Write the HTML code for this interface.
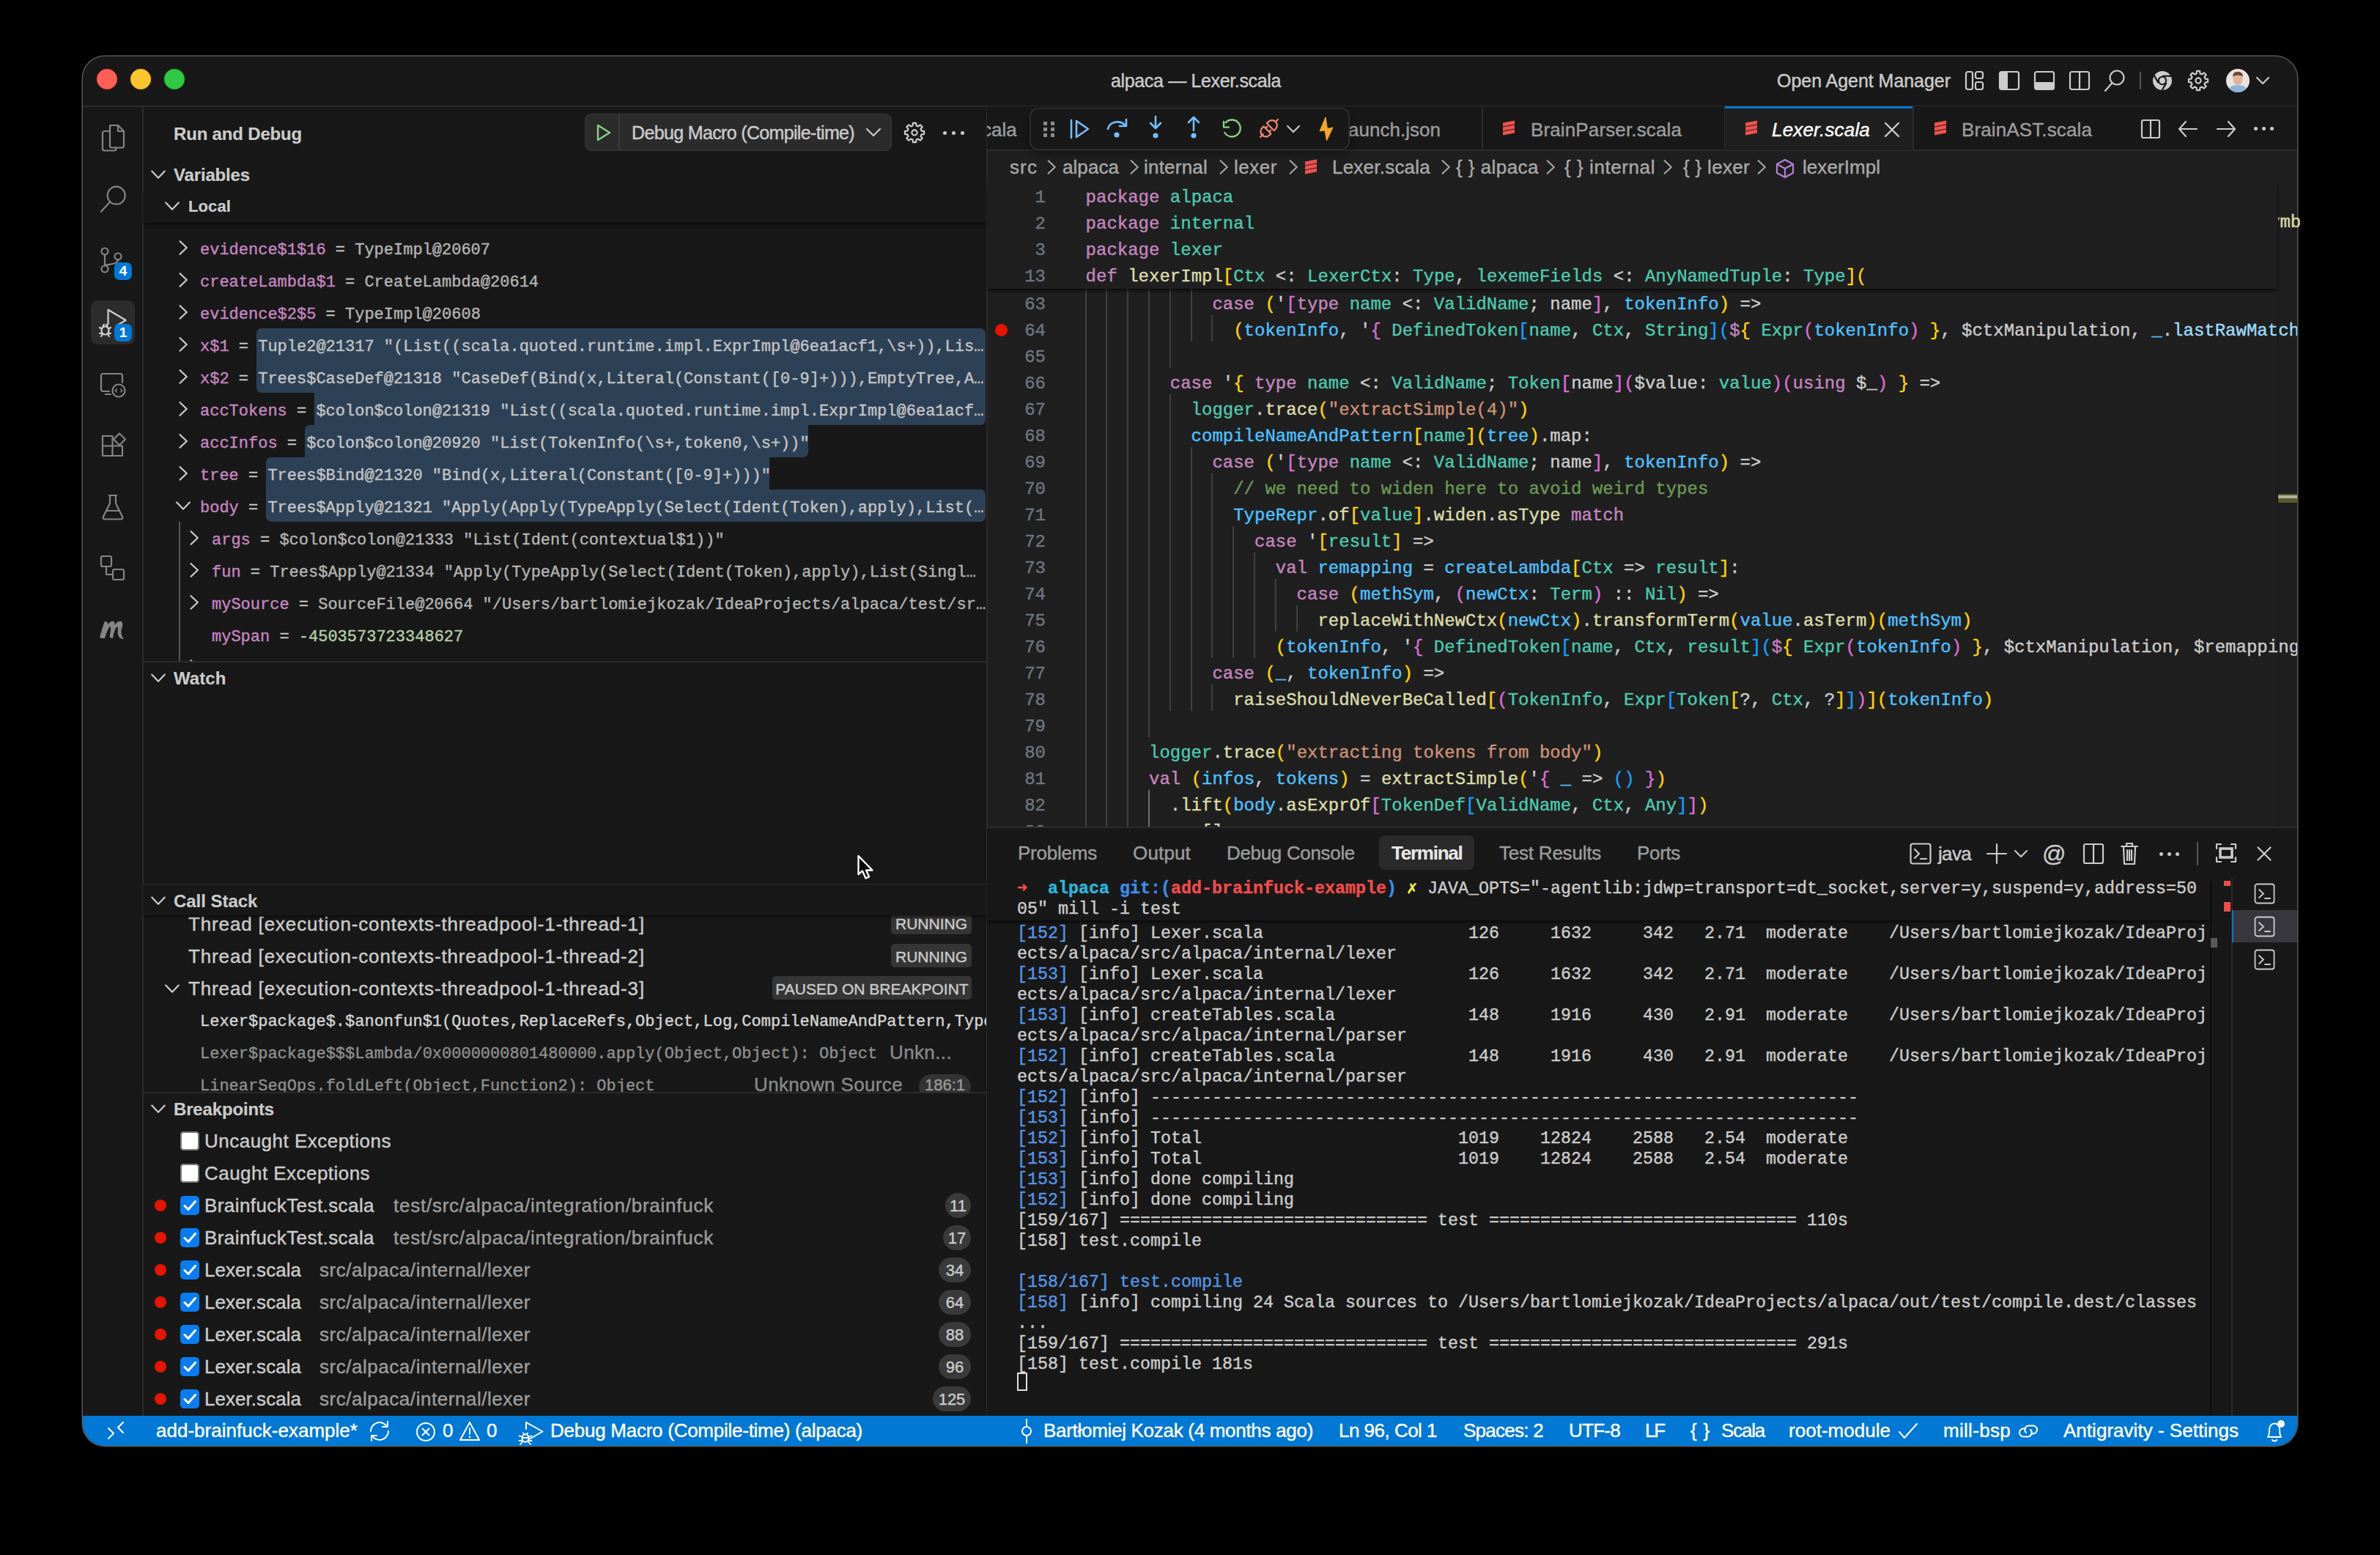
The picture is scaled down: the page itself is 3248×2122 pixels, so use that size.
<!DOCTYPE html>
<html><head><meta charset="utf-8"><style>
html,body{margin:0;padding:0;width:3248px;height:2122px;background:#000;overflow:hidden}
body{position:relative;font-family:"Liberation Sans",sans-serif}
div,svg{position:absolute;box-sizing:border-box}
span{position:static}
div{-webkit-text-stroke:0.4px currentColor}
</style></head><body>
<div style="left:113px;top:77px;width:3022px;height:1896px;background:#181818;border-radius:30px;overflow:hidden;box-shadow:0 0 0 1.5px #565656"></div>
<div style="left:1347px;top:205px;width:1788px;height:924px;background:#1f1f1f;"></div>
<div style="left:113px;top:144px;width:3022px;height:1.5px;background:#2b2b2b;"></div>
<div style="left:194px;top:145px;width:1.5px;height:1787px;background:#2b2b2b;"></div>
<div style="left:1346px;top:145px;width:1.5px;height:1787px;background:#2b2b2b;"></div>
<svg style="left:131px;top:93px;" width="30" height="30" viewBox="0 0 30 30" fill="none"><circle cx="15" cy="15" r="13.8" fill="#ff5f57" stroke="#e0443e" stroke-width="0.8"/></svg>
<svg style="left:177px;top:93px;" width="30" height="30" viewBox="0 0 30 30" fill="none"><circle cx="15" cy="15" r="13.8" fill="#fdc52e" stroke="#e0a822" stroke-width="0.8"/></svg>
<svg style="left:223px;top:93px;" width="30" height="30" viewBox="0 0 30 30" fill="none"><circle cx="15" cy="15" r="13.8" fill="#31c845" stroke="#1fae33" stroke-width="0.8"/></svg>
<div style="left:1516px;top:92.84px;font-family:'Liberation Sans', sans-serif;font-size:25px;line-height:35px;color:#cccccc;white-space:pre;letter-spacing:-0.352px;">alpaca — Lexer.scala</div>
<div style="left:2425px;top:92.84px;font-family:'Liberation Sans', sans-serif;font-size:25px;line-height:35px;color:#cccccc;white-space:pre;letter-spacing:-0.037px;">Open Agent Manager</div>
<svg style="left:2680px;top:95px;" width="30" height="30" viewBox="0 0 30 30" fill="none"><rect x="3" y="3" width="9" height="24" rx="2.5" stroke="#cccccc" stroke-width="2.2" fill="none" stroke-linecap="round" stroke-linejoin="round"/><rect x="16" y="3" width="10" height="9" rx="2.5" stroke="#cccccc" stroke-width="2.2" fill="none" stroke-linecap="round" stroke-linejoin="round"/><rect x="16" y="17" width="10" height="10" rx="2.5" stroke="#cccccc" stroke-width="2.2" fill="none" stroke-linecap="round" stroke-linejoin="round"/></svg>
<svg style="left:2727px;top:95px;" width="30" height="30" viewBox="0 0 30 30" fill="none"><rect x="2" y="3" width="26" height="24" rx="2.5" stroke="#cccccc" stroke-width="2.2" fill="none" stroke-linecap="round" stroke-linejoin="round"/><rect x="2" y="3" width="11" height="24" rx="2" fill="#cccccc"/></svg>
<svg style="left:2775px;top:95px;" width="30" height="30" viewBox="0 0 30 30" fill="none"><rect x="2" y="3" width="26" height="24" rx="2.5" stroke="#cccccc" stroke-width="2.2" fill="none" stroke-linecap="round" stroke-linejoin="round"/><rect x="2" y="17" width="26" height="10" rx="2" fill="#cccccc"/></svg>
<svg style="left:2823px;top:95px;" width="30" height="30" viewBox="0 0 30 30" fill="none"><rect x="2" y="3" width="26" height="24" rx="2.5" stroke="#cccccc" stroke-width="2.2" fill="none" stroke-linecap="round" stroke-linejoin="round"/><path d="M15 3V27" stroke="#cccccc" stroke-width="2.2" fill="none" stroke-linecap="round" stroke-linejoin="round"/></svg>
<svg style="left:2870px;top:93px;" width="32" height="34" viewBox="0 0 32 34" fill="none"><circle cx="19" cy="13" r="9.5" stroke="#cccccc" stroke-width="2.2" fill="none" stroke-linecap="round" stroke-linejoin="round"/><path d="M12.5 20L3 31" stroke="#cccccc" stroke-width="2.2" fill="none" stroke-linecap="round" stroke-linejoin="round"/></svg>
<div style="left:2920px;top:98px;width:2px;height:24px;background:#555555;"></div>
<svg style="left:2936px;top:95px;" width="30" height="30" viewBox="0 0 30 30" fill="none"><circle cx="15" cy="15" r="13" fill="#cccccc"/><circle cx="15" cy="15" r="6.2" fill="#181818"/><circle cx="15" cy="15" r="4.2" fill="#cccccc"/><path d="M15 8.8H27.5" stroke="#181818" stroke-width="2.2"/><path d="M9.6 18.1L3.4 7.4" stroke="#181818" stroke-width="2.2"/><path d="M20.4 18.1L14.2 28.8" stroke="#181818" stroke-width="2.2"/></svg>
<svg style="left:2985px;top:95px" width="30" height="30" viewBox="0 0 30 30" fill="none"><path d="M28.04 12.94 L28.04 17.06 L24.59 17.46 L23.52 20.04 L25.68 22.76 L22.76 25.68 L20.04 23.52 L17.46 24.59 L17.06 28.04 L12.94 28.04 L12.54 24.59 L9.96 23.52 L7.24 25.68 L4.32 22.76 L6.48 20.04 L5.41 17.46 L1.96 17.06 L1.96 12.94 L5.41 12.54 L6.48 9.96 L4.32 7.24 L7.24 4.32 L9.96 6.48 L12.54 5.41 L12.94 1.96 L17.06 1.96 L17.46 5.41 L20.04 6.48 L22.76 4.32 L25.68 7.24 L23.52 9.96 L24.59 12.54Z" stroke="#cccccc" stroke-width="2.2" stroke-linejoin="round"/><circle cx="15.0" cy="15.0" r="3.5999999999999996" stroke="#cccccc" stroke-width="2.2"/></svg>
<svg style="left:3038px;top:94px;" width="32" height="32" viewBox="0 0 32 32" fill="none"><defs><clipPath id="av"><circle cx="16" cy="16" r="16"/></clipPath></defs><g clip-path="url(#av)"><rect width="32" height="32" fill="#e9e4df"/><ellipse cx="16" cy="30" rx="13" ry="8" fill="#8fb3d9"/><ellipse cx="16" cy="14" rx="6.5" ry="8" fill="#e0b49a"/><path d="M9 11C9 5 12 4 16 4C21 4 23 6 23 11C21 8 12 8 9 11Z" fill="#6b4a32"/></g></svg>
<svg style="left:3076px;top:100px;" width="24" height="20" viewBox="0 0 24 20" fill="none"><path d="M4 6L12 14L20 6" stroke="#cccccc" stroke-width="2.2" fill="none" stroke-linecap="round" stroke-linejoin="round"/></svg>
<svg style="left:134px;top:166px;" width="40" height="44" viewBox="0 0 40 44" fill="none"><path d="M16 5H27L35 13V33C35 34.5 34 35.5 32.5 35.5H18.5C17 35.5 16 34.5 16 33V7.5C16 6 17 5 18.5 5Z" stroke="#858585" stroke-width="2.2" fill="none" stroke-linecap="round" stroke-linejoin="round"/><path d="M27 5V13H35" stroke="#858585" stroke-width="2.2" fill="none" stroke-linecap="round" stroke-linejoin="round"/><path d="M16 13H8.5C7 13 6 14 6 15.5V37C6 38.5 7 39.5 8.5 39.5H22C23.5 39.5 24.5 38.5 24.5 37V35.5" stroke="#858585" stroke-width="2.2" fill="none" stroke-linecap="round" stroke-linejoin="round"/></svg>
<svg style="left:134px;top:249px;" width="40" height="44" viewBox="0 0 40 44" fill="none"><circle cx="24.7" cy="17.7" r="12" stroke="#858585" stroke-width="2.2" fill="none" stroke-linecap="round" stroke-linejoin="round"/><path d="M16.3 26.2L4 39.8" stroke="#858585" stroke-width="2.2" fill="none" stroke-linecap="round" stroke-linejoin="round"/></svg>
<svg style="left:134px;top:336px;" width="40" height="40" viewBox="0 0 40 40" fill="none"><circle cx="9" cy="7" r="4.5" stroke="#858585" stroke-width="2.2" fill="none" stroke-linecap="round" stroke-linejoin="round"/><circle cx="9" cy="31" r="4.5" stroke="#858585" stroke-width="2.2" fill="none" stroke-linecap="round" stroke-linejoin="round"/><circle cx="27" cy="14" r="4.5" stroke="#858585" stroke-width="2.2" fill="none" stroke-linecap="round" stroke-linejoin="round"/><path d="M9 11.5V26.5" stroke="#858585" stroke-width="2.2" fill="none" stroke-linecap="round" stroke-linejoin="round"/><path d="M27 18.5C27 24 20 24 9 26" stroke="#858585" stroke-width="2.2" fill="none" stroke-linecap="round" stroke-linejoin="round"/></svg>
<div style="left:156px;top:358px;width:24px;height:24px;border-radius:7px;background:#0078d4"></div>
<div style="left:156px;top:357.42px;font-family:'Liberation Sans', sans-serif;font-size:19px;line-height:26px;color:#ffffff;white-space:pre;font-weight:700;-webkit-text-stroke:0.15px currentColor;width:24px;text-align:center;">4</div>
<div style="left:124px;top:410px;width:60px;height:60px;border-radius:9px;background:#2c2c2c"></div>
<svg style="left:134px;top:418px;" width="44" height="44" viewBox="0 0 44 44" fill="none"><path d="M13.6 4.7L37.7 19L13.6 33.3Z" stroke="#d0d0d0" stroke-width="2.2" fill="none" stroke-linecap="round" stroke-linejoin="round"/><circle cx="18" cy="33" r="9" fill="#2c2c2c"/><ellipse cx="9.5" cy="33" rx="5" ry="5.5" stroke="#d0d0d0" stroke-width="2.2" fill="none" stroke-linecap="round" stroke-linejoin="round"/><path d="M2 29L4.5 30.5M2 37H4.5M17 29L14.5 30.5M17 37H14.5M6.5 27L8 25M12.5 27L11 25M4 41L6 38M15 41L13 38" stroke="#d0d0d0" stroke-width="2.2" fill="none" stroke-linecap="round" stroke-linejoin="round"/></svg>
<div style="left:156px;top:442px;width:24px;height:24px;border-radius:7px;background:#0078d4"></div>
<div style="left:156px;top:441.42px;font-family:'Liberation Sans', sans-serif;font-size:19px;line-height:26px;color:#ffffff;white-space:pre;font-weight:700;-webkit-text-stroke:0.15px currentColor;width:24px;text-align:center;">1</div>
<svg style="left:134px;top:505px;" width="40" height="40" viewBox="0 0 40 40" fill="none"><path d="M15 29H6.5C5 29 4 28 4 26.5V7.5C4 6 5 5 6.5 5H30.5C32 5 33 6 33 7.5V17" stroke="#858585" stroke-width="2.2" fill="none" stroke-linecap="round" stroke-linejoin="round"/><path d="M10 33H17" stroke="#858585" stroke-width="2.2" fill="none" stroke-linecap="round" stroke-linejoin="round"/><circle cx="28" cy="28" r="8.5" stroke="#858585" stroke-width="2.2" fill="none" stroke-linecap="round" stroke-linejoin="round"/><path d="M25.5 25.5L23.5 28L25.5 30.5M30.5 25.5L32.5 28L30.5 30.5" stroke="#858585" stroke-width="1.6" fill="none"/></svg>
<svg style="left:134px;top:588px;" width="40" height="40" viewBox="0 0 40 40" fill="none"><path d="M6 7H19.5V20.5H6Z M6 20.5H19.5V34H6Z M19.5 20.5H33V34H19.5Z" stroke="#858585" stroke-width="2.2" fill="none" stroke-linecap="round" stroke-linejoin="round"/><path d="M29 3.5L37 11.5L29 19.5L21 11.5Z" stroke="#858585" stroke-width="2.2" fill="none" stroke-linecap="round" stroke-linejoin="round"/></svg>
<svg style="left:136px;top:672px;" width="36" height="40" viewBox="0 0 36 40" fill="none"><path d="M13 4H23M14 4V15L5 33C4 35 5 36.5 7 36.5H29C31 36.5 32 35 31 33L22 15V4" stroke="#858585" stroke-width="2.2" fill="none" stroke-linecap="round" stroke-linejoin="round"/><path d="M9 25H27" stroke="#858585" stroke-width="2.2" fill="none" stroke-linecap="round" stroke-linejoin="round"/></svg>
<svg style="left:134px;top:755px;" width="40" height="40" viewBox="0 0 40 40" fill="none"><rect x="4" y="4" width="14" height="14" rx="2" stroke="#858585" stroke-width="2.2" fill="none" stroke-linecap="round" stroke-linejoin="round"/><rect x="20" y="22" width="15" height="14" rx="2" stroke="#858585" stroke-width="2.2" fill="none" stroke-linecap="round" stroke-linejoin="round"/><path d="M11 18V29H20" stroke="#858585" stroke-width="2.2" fill="none" stroke-linecap="round" stroke-linejoin="round"/></svg>
<svg style="left:132px;top:840px;" width="44" height="36" viewBox="0 0 44 36" fill="none"><path d="M4 30C7 20 9 12 11 8C13 8 16 9 15 13C17 9 20 7 23 8C25 9 25 12 24 14C27 9 30 7 33 8C36 9 36 13 34 18C33 22 33 27 37 32C33 32 30 30 29 26C28 22 30 17 28 15C25 17 23 24 22 31C19 31 17 30 18 26C19 21 20 17 18 15C15 18 13 25 11 31C8 31 6 31 4 30Z" fill="#858585"/></svg>
<div style="left:1347px;top:145px;width:1788px;height:59px;background:#181818;"></div>
<div style="left:1347px;top:204px;width:1788px;height:1.5px;background:#2b2b2b;"></div>
<div style="left:2022px;top:145px;width:1.5px;height:60px;background:#2b2b2b;"></div>
<div style="left:2353px;top:145px;width:1.5px;height:60px;background:#2b2b2b;"></div>
<div style="left:2610px;top:145px;width:1.5px;height:60px;background:#2b2b2b;"></div>
<div style="left:2354px;top:146px;width:256px;height:59px;background:#1f1f1f;"></div>
<div style="left:2354px;top:145px;width:256px;height:2.5px;background:#0078d4;"></div>
<div style="left:1340px;top:158.99px;font-family:'Liberation Sans', sans-serif;font-size:26px;line-height:36px;color:#9d9d9d;white-space:pre;clip-path:inset(0 0 0 7px);">cala</div>
<div style="left:1840px;top:158.99px;font-family:'Liberation Sans', sans-serif;font-size:26px;line-height:36px;color:#9d9d9d;white-space:pre;letter-spacing:0.023px;">aunch.json</div>
<svg style="left:2050px;top:164px;" width="18" height="22" viewBox="0 0 18 22" fill="none"><path d="M1 3.5L17 0.5V5.5L1 8.5Z M1 9.5L17 6.5V11.5L1 14.5Z M1 15.5L17 12.5V17.5L1 20.5Z" fill="#f0524f"/></svg>
<div style="left:2089px;top:158.99px;font-family:'Liberation Sans', sans-serif;font-size:26px;line-height:36px;color:#9d9d9d;white-space:pre;letter-spacing:0.131px;">BrainParser.scala</div>
<svg style="left:2381px;top:164px;" width="18" height="22" viewBox="0 0 18 22" fill="none"><path d="M1 3.5L17 0.5V5.5L1 8.5Z M1 9.5L17 6.5V11.5L1 14.5Z M1 15.5L17 12.5V17.5L1 20.5Z" fill="#f0524f"/></svg>
<div style="left:2418px;top:158.99px;font-family:'Liberation Sans', sans-serif;font-size:26px;line-height:36px;color:#ffffff;white-space:pre;font-style:italic;letter-spacing:0.182px;">Lexer.scala</div>
<svg style="left:2570px;top:165px;" width="24" height="24" viewBox="0 0 24 24" fill="none"><path d="M3 3L21 21M21 3L3 21" stroke="#cccccc" stroke-width="2.4" stroke-linecap="round"/></svg>
<svg style="left:2639px;top:164px;" width="18" height="22" viewBox="0 0 18 22" fill="none"><path d="M1 3.5L17 0.5V5.5L1 8.5Z M1 9.5L17 6.5V11.5L1 14.5Z M1 15.5L17 12.5V17.5L1 20.5Z" fill="#f0524f"/></svg>
<div style="left:2677px;top:158.99px;font-family:'Liberation Sans', sans-serif;font-size:26px;line-height:36px;color:#9d9d9d;white-space:pre;letter-spacing:0.121px;">BrainAST.scala</div>
<svg style="left:2921px;top:162px;" width="28" height="28" viewBox="0 0 28 28" fill="none"><rect x="2" y="2" width="24" height="24" rx="2" stroke="#cccccc" stroke-width="2.2" fill="none" stroke-linecap="round" stroke-linejoin="round"/><path d="M14 2V26" stroke="#cccccc" stroke-width="2.2" fill="none" stroke-linecap="round" stroke-linejoin="round"/></svg>
<svg style="left:2971px;top:162px;" width="30" height="28" viewBox="0 0 30 28" fill="none"><path d="M27 14H3M12 4L3 14L12 24" stroke="#cccccc" stroke-width="2.2" fill="none" stroke-linecap="round" stroke-linejoin="round"/></svg>
<svg style="left:3023px;top:162px;" width="30" height="28" viewBox="0 0 30 28" fill="none"><path d="M3 14H27M18 4L27 14L18 24" stroke="#cccccc" stroke-width="2.2" fill="none" stroke-linecap="round" stroke-linejoin="round"/></svg>
<div style="left:3076px;top:173px;width:5px;height:5px;border-radius:3px;background:#cccccc"></div>
<div style="left:3087px;top:173px;width:5px;height:5px;border-radius:3px;background:#cccccc"></div>
<div style="left:3098px;top:173px;width:5px;height:5px;border-radius:3px;background:#cccccc"></div>
<div style="left:1405px;top:147px;width:437px;height:58px;border-radius:12px;background:#181818;box-shadow:inset 0 0 0 1.5px #333333, 0 4px 10px rgba(0,0,0,0.4)"></div>
<div style="left:1424px;top:166px;width:5px;height:5px;background:#8c8c8c"></div>
<div style="left:1434px;top:166px;width:5px;height:5px;background:#8c8c8c"></div>
<div style="left:1424px;top:174px;width:5px;height:5px;background:#8c8c8c"></div>
<div style="left:1434px;top:174px;width:5px;height:5px;background:#8c8c8c"></div>
<div style="left:1424px;top:182px;width:5px;height:5px;background:#8c8c8c"></div>
<div style="left:1434px;top:182px;width:5px;height:5px;background:#8c8c8c"></div>
<svg style="left:1458px;top:160px;" width="32" height="32" viewBox="0 0 32 32" fill="none"><path d="M4 4V28" stroke="#75beff" stroke-width="2.6" fill="none" stroke-linecap="round" stroke-linejoin="round"/><path d="M11 5L27 16L11 27Z" stroke="#75beff" stroke-width="2.6" fill="none" stroke-linecap="round" stroke-linejoin="round"/></svg>
<svg style="left:1508px;top:158px;" width="34" height="34" viewBox="0 0 34 34" fill="none"><path d="M4 18C6 8 20 5 28 13" stroke="#75beff" stroke-width="2.6" fill="none" stroke-linecap="round" stroke-linejoin="round"/><path d="M29 5V14H20" stroke="#75beff" stroke-width="2.6" fill="none" stroke-linecap="round" stroke-linejoin="round"/><circle cx="16" cy="26" r="3.6" fill="#75beff"/></svg>
<svg style="left:1561px;top:156px;" width="32" height="38" viewBox="0 0 32 38" fill="none"><path d="M16 3V19M9 12L16 19L23 12" stroke="#75beff" stroke-width="2.6" fill="none" stroke-linecap="round" stroke-linejoin="round"/><circle cx="16" cy="29" r="3.6" fill="#75beff"/></svg>
<svg style="left:1613px;top:156px;" width="32" height="38" viewBox="0 0 32 38" fill="none"><path d="M16 22V4M9 11L16 4L23 11" stroke="#75beff" stroke-width="2.6" fill="none" stroke-linecap="round" stroke-linejoin="round"/><circle cx="16" cy="29" r="3.6" fill="#75beff"/></svg>
<svg style="left:1664px;top:158px;" width="36" height="36" viewBox="0 0 36 36" fill="none"><path d="M7.4 23A11.5 11.5 0 1 0 8.7 9.3" stroke="#89d185" stroke-width="2.4" fill="none" stroke-linecap="round"/><path d="M6 8V15.6H13" stroke="#89d185" stroke-width="2.4" fill="none" stroke-linecap="round" stroke-linejoin="round"/></svg>
<svg style="left:1714px;top:157px;" width="36" height="36" viewBox="0 0 36 36" fill="none"><g transform="rotate(-45 18 18)" stroke="#f48771" stroke-width="2.2" fill="none" stroke-linejoin="round" stroke-linecap="round"><path d="M1 18H6.5"/><path d="M14.5 11H11.5A7 7 0 0 0 11.5 25H14.5Z"/><path d="M14.5 14.5H17.5M14.5 21.5H17.5"/><path d="M20.5 11H23.5A7 7 0 0 1 23.5 25H20.5Z"/><path d="M30.5 18H35"/></g></svg>
<svg style="left:1754px;top:166px;" width="22" height="20" viewBox="0 0 22 20" fill="none"><path d="M3 6L11 14L19 6" stroke="#cccccc" stroke-width="2" fill="none" stroke-linecap="round"/></svg>
<svg style="left:1796px;top:156px;" width="28" height="40" viewBox="0 0 28 40" fill="none"><path d="M13 4L5 23L12 22L14.5 36L23 18L15.5 19.5Z" fill="#f5a623" stroke="#f5a623" stroke-width="1" stroke-linejoin="round"/></svg>
<div style="left:1378px;top:209.99px;font-family:'Liberation Sans', sans-serif;font-size:26px;line-height:36px;color:#a9a9a9;white-space:pre;letter-spacing:1.109px;">src</div>
<svg style="left:1424px;top:217.0px;" width="22" height="22" viewBox="0 0 22 22" fill="none"><path d="M6.6 2.2L15.8 11.0L6.6 19.8" stroke="#a9a9a9" stroke-width="2" fill="none" stroke-linecap="round" stroke-linejoin="round"/></svg>
<div style="left:1450px;top:209.99px;font-family:'Liberation Sans', sans-serif;font-size:26px;line-height:36px;color:#a9a9a9;white-space:pre;letter-spacing:0.062px;">alpaca</div>
<svg style="left:1537px;top:217.0px;" width="22" height="22" viewBox="0 0 22 22" fill="none"><path d="M6.6 2.2L15.8 11.0L6.6 19.8" stroke="#a9a9a9" stroke-width="2" fill="none" stroke-linecap="round" stroke-linejoin="round"/></svg>
<div style="left:1561px;top:209.99px;font-family:'Liberation Sans', sans-serif;font-size:26px;line-height:36px;color:#a9a9a9;white-space:pre;letter-spacing:0.215px;">internal</div>
<svg style="left:1659px;top:217.0px;" width="22" height="22" viewBox="0 0 22 22" fill="none"><path d="M6.6 2.2L15.8 11.0L6.6 19.8" stroke="#a9a9a9" stroke-width="2" fill="none" stroke-linecap="round" stroke-linejoin="round"/></svg>
<div style="left:1684px;top:209.99px;font-family:'Liberation Sans', sans-serif;font-size:26px;line-height:36px;color:#a9a9a9;white-space:pre;letter-spacing:0.528px;">lexer</div>
<svg style="left:1754px;top:217.0px;" width="22" height="22" viewBox="0 0 22 22" fill="none"><path d="M6.6 2.2L15.8 11.0L6.6 19.8" stroke="#a9a9a9" stroke-width="2" fill="none" stroke-linecap="round" stroke-linejoin="round"/></svg>
<svg style="left:1780px;top:217px;" width="18" height="22" viewBox="0 0 18 22" fill="none"><path d="M1 3.5L17 0.5V5.5L1 8.5Z M1 9.5L17 6.5V11.5L1 14.5Z M1 15.5L17 12.5V17.5L1 20.5Z" fill="#f0524f"/></svg>
<div style="left:1818px;top:209.99px;font-family:'Liberation Sans', sans-serif;font-size:26px;line-height:36px;color:#a9a9a9;white-space:pre;letter-spacing:0.224px;">Lexer.scala</div>
<svg style="left:1962px;top:217.0px;" width="22" height="22" viewBox="0 0 22 22" fill="none"><path d="M6.6 2.2L15.8 11.0L6.6 19.8" stroke="#a9a9a9" stroke-width="2" fill="none" stroke-linecap="round" stroke-linejoin="round"/></svg>
<div style="left:1987px;top:209.99px;font-family:'Liberation Sans', sans-serif;font-size:26px;line-height:36px;color:#a9a9a9;white-space:pre;letter-spacing:0.456px;">{ } alpaca</div>
<svg style="left:2105px;top:217.0px;" width="22" height="22" viewBox="0 0 22 22" fill="none"><path d="M6.6 2.2L15.8 11.0L6.6 19.8" stroke="#a9a9a9" stroke-width="2" fill="none" stroke-linecap="round" stroke-linejoin="round"/></svg>
<div style="left:2135px;top:209.99px;font-family:'Liberation Sans', sans-serif;font-size:26px;line-height:36px;color:#a9a9a9;white-space:pre;letter-spacing:0.576px;">{ } internal</div>
<svg style="left:2265px;top:217.0px;" width="22" height="22" viewBox="0 0 22 22" fill="none"><path d="M6.6 2.2L15.8 11.0L6.6 19.8" stroke="#a9a9a9" stroke-width="2" fill="none" stroke-linecap="round" stroke-linejoin="round"/></svg>
<div style="left:2297px;top:209.99px;font-family:'Liberation Sans', sans-serif;font-size:26px;line-height:36px;color:#a9a9a9;white-space:pre;letter-spacing:0.314px;">{ } lexer</div>
<svg style="left:2393px;top:217.0px;" width="22" height="22" viewBox="0 0 22 22" fill="none"><path d="M6.6 2.2L15.8 11.0L6.6 19.8" stroke="#a9a9a9" stroke-width="2" fill="none" stroke-linecap="round" stroke-linejoin="round"/></svg>
<svg style="left:2421px;top:215px;" width="30" height="30" viewBox="0 0 30 30" fill="none"><path d="M15 3L26 9V21L15 27L4 21V9Z M4 9L15 15L26 9 M15 15V27" stroke="#b180d7" stroke-width="2.2" fill="none" stroke-linejoin="round"/></svg>
<div style="left:2460px;top:209.99px;font-family:'Liberation Sans', sans-serif;font-size:26px;line-height:36px;color:#a9a9a9;white-space:pre;letter-spacing:0.057px;">lexerImpl</div>
<div style="left:3108px;top:250px;width:1.2px;height:879px;background:#131313;"></div>
<div style="left:1347px;top:394px;width:1788px;height:735px;overflow:hidden">
<div style="left:134px;top:0px;width:1.5px;height:36px;background:#404040;"></div>
<div style="left:162px;top:0px;width:1.5px;height:36px;background:#404040;"></div>
<div style="left:191px;top:0px;width:1.5px;height:36px;background:#404040;"></div>
<div style="left:220px;top:0px;width:1.5px;height:36px;background:#404040;"></div>
<div style="left:249px;top:0px;width:1.5px;height:36px;background:#404040;"></div>
<div style="left:278px;top:0px;width:1.5px;height:36px;background:#404040;"></div>
<div style="left:80px;top:5.10px;font-family:'Liberation Mono', monospace;font-size:24px;line-height:33px;color:#6e7681;white-space:pre;transform:translateX(-100%);">63</div>
<div style="left:307.39999999999986px;top:5.10px;font-family:'Liberation Mono', monospace;font-size:24px;line-height:33px;color:#cccccc;white-space:pre;"><span style="color:#c586c0">case</span><span style="color:#cccccc"> </span><span style="color:#ffd700">(</span><span style="color:#cccccc">&#x27;</span><span style="color:#da70d6">[</span><span style="color:#c586c0">type</span><span style="color:#cccccc"> </span><span style="color:#4ec9b0">name</span><span style="color:#cccccc"> &lt;: </span><span style="color:#4ec9b0">ValidName</span><span style="color:#cccccc">; </span><span style="color:#cccccc">name</span><span style="color:#da70d6">]</span><span style="color:#cccccc">, </span><span style="color:#4fc1ff">tokenInfo</span><span style="color:#ffd700">)</span><span style="color:#cccccc"> =&gt;</span></div>
<div style="left:134px;top:36px;width:1.5px;height:36px;background:#404040;"></div>
<div style="left:162px;top:36px;width:1.5px;height:36px;background:#404040;"></div>
<div style="left:191px;top:36px;width:1.5px;height:36px;background:#404040;"></div>
<div style="left:220px;top:36px;width:1.5px;height:36px;background:#404040;"></div>
<div style="left:249px;top:36px;width:1.5px;height:36px;background:#404040;"></div>
<div style="left:278px;top:36px;width:1.5px;height:36px;background:#404040;"></div>
<div style="left:306px;top:36px;width:1.5px;height:36px;background:#404040;"></div>
<div style="left:80px;top:41.10px;font-family:'Liberation Mono', monospace;font-size:24px;line-height:33px;color:#6e7681;white-space:pre;transform:translateX(-100%);">64</div>
<div style="left:336.1999999999998px;top:41.10px;font-family:'Liberation Mono', monospace;font-size:24px;line-height:33px;color:#cccccc;white-space:pre;"><span style="color:#ffd700">(</span><span style="color:#4fc1ff">tokenInfo</span><span style="color:#cccccc">, </span><span style="color:#cccccc">&#x27;</span><span style="color:#da70d6">{</span><span style="color:#cccccc"> </span><span style="color:#4ec9b0">DefinedToken</span><span style="color:#179fff">[</span><span style="color:#4ec9b0">name</span><span style="color:#cccccc">, </span><span style="color:#4ec9b0">Ctx</span><span style="color:#cccccc">, </span><span style="color:#4ec9b0">String</span><span style="color:#179fff">]</span><span style="color:#179fff">(</span><span style="color:#c586c0">$</span><span style="color:#ffd700">{</span><span style="color:#cccccc"> </span><span style="color:#4ec9b0">Expr</span><span style="color:#da70d6">(</span><span style="color:#4fc1ff">tokenInfo</span><span style="color:#da70d6">)</span><span style="color:#cccccc"> </span><span style="color:#ffd700">}</span><span style="color:#cccccc">, $ctxManipulation, </span><span style="color:#4fc1ff">_</span><span style="color:#cccccc">.</span><span style="color:#9cdcfe">lastRawMatch</span><span style="color:#cccccc">, </span><span style="color:#9cdcfe">tokenInfo</span><span style="color:#179fff">)</span></div>
<div style="left:134px;top:72px;width:1.5px;height:36px;background:#404040;"></div>
<div style="left:162px;top:72px;width:1.5px;height:36px;background:#404040;"></div>
<div style="left:191px;top:72px;width:1.5px;height:36px;background:#404040;"></div>
<div style="left:220px;top:72px;width:1.5px;height:36px;background:#404040;"></div>
<div style="left:249px;top:72px;width:1.5px;height:36px;background:#404040;"></div>
<div style="left:80px;top:77.10px;font-family:'Liberation Mono', monospace;font-size:24px;line-height:33px;color:#6e7681;white-space:pre;transform:translateX(-100%);">65</div>
<div style="left:134px;top:108px;width:1.5px;height:36px;background:#404040;"></div>
<div style="left:162px;top:108px;width:1.5px;height:36px;background:#404040;"></div>
<div style="left:191px;top:108px;width:1.5px;height:36px;background:#404040;"></div>
<div style="left:220px;top:108px;width:1.5px;height:36px;background:#404040;"></div>
<div style="left:80px;top:113.10px;font-family:'Liberation Mono', monospace;font-size:24px;line-height:33px;color:#6e7681;white-space:pre;transform:translateX(-100%);">66</div>
<div style="left:249.79999999999995px;top:113.10px;font-family:'Liberation Mono', monospace;font-size:24px;line-height:33px;color:#cccccc;white-space:pre;"><span style="color:#c586c0">case</span><span style="color:#cccccc"> </span><span style="color:#cccccc">&#x27;</span><span style="color:#ffd700">{</span><span style="color:#cccccc"> </span><span style="color:#c586c0">type</span><span style="color:#cccccc"> </span><span style="color:#4ec9b0">name</span><span style="color:#cccccc"> &lt;: </span><span style="color:#4ec9b0">ValidName</span><span style="color:#cccccc">; </span><span style="color:#4ec9b0">Token</span><span style="color:#da70d6">[</span><span style="color:#cccccc">name</span><span style="color:#da70d6">]</span><span style="color:#da70d6">(</span><span style="color:#cccccc">$value</span><span style="color:#cccccc">: </span><span style="color:#4ec9b0">value</span><span style="color:#da70d6">)</span><span style="color:#da70d6">(</span><span style="color:#c586c0">using</span><span style="color:#cccccc"> $_</span><span style="color:#da70d6">)</span><span style="color:#cccccc"> </span><span style="color:#ffd700">}</span><span style="color:#cccccc"> =&gt;</span></div>
<div style="left:134px;top:144px;width:1.5px;height:36px;background:#404040;"></div>
<div style="left:162px;top:144px;width:1.5px;height:36px;background:#404040;"></div>
<div style="left:191px;top:144px;width:1.5px;height:36px;background:#404040;"></div>
<div style="left:220px;top:144px;width:1.5px;height:36px;background:#404040;"></div>
<div style="left:249px;top:144px;width:1.5px;height:36px;background:#404040;"></div>
<div style="left:80px;top:149.10px;font-family:'Liberation Mono', monospace;font-size:24px;line-height:33px;color:#6e7681;white-space:pre;transform:translateX(-100%);">67</div>
<div style="left:278.5999999999999px;top:149.10px;font-family:'Liberation Mono', monospace;font-size:24px;line-height:33px;color:#cccccc;white-space:pre;"><span style="color:#4ec9b0">logger</span><span style="color:#cccccc">.</span><span style="color:#dcdcaa">trace</span><span style="color:#ffd700">(</span><span style="color:#ce9178">&quot;extractSimple(4)&quot;</span><span style="color:#ffd700">)</span></div>
<div style="left:134px;top:180px;width:1.5px;height:36px;background:#404040;"></div>
<div style="left:162px;top:180px;width:1.5px;height:36px;background:#404040;"></div>
<div style="left:191px;top:180px;width:1.5px;height:36px;background:#404040;"></div>
<div style="left:220px;top:180px;width:1.5px;height:36px;background:#404040;"></div>
<div style="left:249px;top:180px;width:1.5px;height:36px;background:#404040;"></div>
<div style="left:80px;top:185.10px;font-family:'Liberation Mono', monospace;font-size:24px;line-height:33px;color:#6e7681;white-space:pre;transform:translateX(-100%);">68</div>
<div style="left:278.5999999999999px;top:185.10px;font-family:'Liberation Mono', monospace;font-size:24px;line-height:33px;color:#cccccc;white-space:pre;"><span style="color:#4fc1ff">compileNameAndPattern</span><span style="color:#ffd700">[</span><span style="color:#4ec9b0">name</span><span style="color:#ffd700">]</span><span style="color:#ffd700">(</span><span style="color:#4fc1ff">tree</span><span style="color:#ffd700">)</span><span style="color:#cccccc">.map:</span></div>
<div style="left:134px;top:216px;width:1.5px;height:36px;background:#404040;"></div>
<div style="left:162px;top:216px;width:1.5px;height:36px;background:#404040;"></div>
<div style="left:191px;top:216px;width:1.5px;height:36px;background:#404040;"></div>
<div style="left:220px;top:216px;width:1.5px;height:36px;background:#404040;"></div>
<div style="left:249px;top:216px;width:1.5px;height:36px;background:#404040;"></div>
<div style="left:278px;top:216px;width:1.5px;height:36px;background:#404040;"></div>
<div style="left:80px;top:221.10px;font-family:'Liberation Mono', monospace;font-size:24px;line-height:33px;color:#6e7681;white-space:pre;transform:translateX(-100%);">69</div>
<div style="left:307.39999999999986px;top:221.10px;font-family:'Liberation Mono', monospace;font-size:24px;line-height:33px;color:#cccccc;white-space:pre;"><span style="color:#c586c0">case</span><span style="color:#cccccc"> </span><span style="color:#ffd700">(</span><span style="color:#cccccc">&#x27;</span><span style="color:#da70d6">[</span><span style="color:#c586c0">type</span><span style="color:#cccccc"> </span><span style="color:#4ec9b0">name</span><span style="color:#cccccc"> &lt;: </span><span style="color:#4ec9b0">ValidName</span><span style="color:#cccccc">; </span><span style="color:#cccccc">name</span><span style="color:#da70d6">]</span><span style="color:#cccccc">, </span><span style="color:#4fc1ff">tokenInfo</span><span style="color:#ffd700">)</span><span style="color:#cccccc"> =&gt;</span></div>
<div style="left:134px;top:252px;width:1.5px;height:36px;background:#404040;"></div>
<div style="left:162px;top:252px;width:1.5px;height:36px;background:#404040;"></div>
<div style="left:191px;top:252px;width:1.5px;height:36px;background:#404040;"></div>
<div style="left:220px;top:252px;width:1.5px;height:36px;background:#404040;"></div>
<div style="left:249px;top:252px;width:1.5px;height:36px;background:#404040;"></div>
<div style="left:278px;top:252px;width:1.5px;height:36px;background:#404040;"></div>
<div style="left:306px;top:252px;width:1.5px;height:36px;background:#404040;"></div>
<div style="left:80px;top:257.10px;font-family:'Liberation Mono', monospace;font-size:24px;line-height:33px;color:#6e7681;white-space:pre;transform:translateX(-100%);">70</div>
<div style="left:336.1999999999998px;top:257.10px;font-family:'Liberation Mono', monospace;font-size:24px;line-height:33px;color:#cccccc;white-space:pre;"><span style="color:#6a9955">// we need to widen here to avoid weird types</span></div>
<div style="left:134px;top:288px;width:1.5px;height:36px;background:#404040;"></div>
<div style="left:162px;top:288px;width:1.5px;height:36px;background:#404040;"></div>
<div style="left:191px;top:288px;width:1.5px;height:36px;background:#404040;"></div>
<div style="left:220px;top:288px;width:1.5px;height:36px;background:#404040;"></div>
<div style="left:249px;top:288px;width:1.5px;height:36px;background:#404040;"></div>
<div style="left:278px;top:288px;width:1.5px;height:36px;background:#404040;"></div>
<div style="left:306px;top:288px;width:1.5px;height:36px;background:#404040;"></div>
<div style="left:80px;top:293.10px;font-family:'Liberation Mono', monospace;font-size:24px;line-height:33px;color:#6e7681;white-space:pre;transform:translateX(-100%);">71</div>
<div style="left:336.1999999999998px;top:293.10px;font-family:'Liberation Mono', monospace;font-size:24px;line-height:33px;color:#cccccc;white-space:pre;"><span style="color:#4fc1ff">TypeRepr</span><span style="color:#cccccc">.</span><span style="color:#dcdcaa">of</span><span style="color:#ffd700">[</span><span style="color:#4ec9b0">value</span><span style="color:#ffd700">]</span><span style="color:#cccccc">.</span><span style="color:#dcdcaa">widen</span><span style="color:#cccccc">.</span><span style="color:#dcdcaa">asType</span><span style="color:#cccccc"> </span><span style="color:#c586c0">match</span></div>
<div style="left:134px;top:324px;width:1.5px;height:36px;background:#404040;"></div>
<div style="left:162px;top:324px;width:1.5px;height:36px;background:#404040;"></div>
<div style="left:191px;top:324px;width:1.5px;height:36px;background:#404040;"></div>
<div style="left:220px;top:324px;width:1.5px;height:36px;background:#404040;"></div>
<div style="left:249px;top:324px;width:1.5px;height:36px;background:#404040;"></div>
<div style="left:278px;top:324px;width:1.5px;height:36px;background:#404040;"></div>
<div style="left:306px;top:324px;width:1.5px;height:36px;background:#404040;"></div>
<div style="left:335px;top:324px;width:1.5px;height:36px;background:#404040;"></div>
<div style="left:80px;top:329.10px;font-family:'Liberation Mono', monospace;font-size:24px;line-height:33px;color:#6e7681;white-space:pre;transform:translateX(-100%);">72</div>
<div style="left:365.0px;top:329.10px;font-family:'Liberation Mono', monospace;font-size:24px;line-height:33px;color:#cccccc;white-space:pre;"><span style="color:#c586c0">case</span><span style="color:#cccccc"> &#x27;</span><span style="color:#ffd700">[</span><span style="color:#4ec9b0">result</span><span style="color:#ffd700">]</span><span style="color:#cccccc"> =&gt;</span></div>
<div style="left:134px;top:360px;width:1.5px;height:36px;background:#404040;"></div>
<div style="left:162px;top:360px;width:1.5px;height:36px;background:#404040;"></div>
<div style="left:191px;top:360px;width:1.5px;height:36px;background:#404040;"></div>
<div style="left:220px;top:360px;width:1.5px;height:36px;background:#404040;"></div>
<div style="left:249px;top:360px;width:1.5px;height:36px;background:#404040;"></div>
<div style="left:278px;top:360px;width:1.5px;height:36px;background:#404040;"></div>
<div style="left:306px;top:360px;width:1.5px;height:36px;background:#404040;"></div>
<div style="left:335px;top:360px;width:1.5px;height:36px;background:#404040;"></div>
<div style="left:364px;top:360px;width:1.5px;height:36px;background:#404040;"></div>
<div style="left:80px;top:365.10px;font-family:'Liberation Mono', monospace;font-size:24px;line-height:33px;color:#6e7681;white-space:pre;transform:translateX(-100%);">73</div>
<div style="left:393.79999999999995px;top:365.10px;font-family:'Liberation Mono', monospace;font-size:24px;line-height:33px;color:#cccccc;white-space:pre;"><span style="color:#c586c0">val</span><span style="color:#cccccc"> </span><span style="color:#4fc1ff">remapping</span><span style="color:#cccccc"> = </span><span style="color:#4fc1ff">createLambda</span><span style="color:#ffd700">[</span><span style="color:#4ec9b0">Ctx</span><span style="color:#cccccc"> =&gt; </span><span style="color:#4ec9b0">result</span><span style="color:#ffd700">]</span><span style="color:#cccccc">:</span></div>
<div style="left:134px;top:396px;width:1.5px;height:36px;background:#404040;"></div>
<div style="left:162px;top:396px;width:1.5px;height:36px;background:#404040;"></div>
<div style="left:191px;top:396px;width:1.5px;height:36px;background:#404040;"></div>
<div style="left:220px;top:396px;width:1.5px;height:36px;background:#404040;"></div>
<div style="left:249px;top:396px;width:1.5px;height:36px;background:#404040;"></div>
<div style="left:278px;top:396px;width:1.5px;height:36px;background:#404040;"></div>
<div style="left:306px;top:396px;width:1.5px;height:36px;background:#404040;"></div>
<div style="left:335px;top:396px;width:1.5px;height:36px;background:#404040;"></div>
<div style="left:364px;top:396px;width:1.5px;height:36px;background:#404040;"></div>
<div style="left:393px;top:396px;width:1.5px;height:36px;background:#404040;"></div>
<div style="left:80px;top:401.10px;font-family:'Liberation Mono', monospace;font-size:24px;line-height:33px;color:#6e7681;white-space:pre;transform:translateX(-100%);">74</div>
<div style="left:422.5999999999999px;top:401.10px;font-family:'Liberation Mono', monospace;font-size:24px;line-height:33px;color:#cccccc;white-space:pre;"><span style="color:#c586c0">case</span><span style="color:#cccccc"> </span><span style="color:#ffd700">(</span><span style="color:#4fc1ff">methSym</span><span style="color:#cccccc">, </span><span style="color:#da70d6">(</span><span style="color:#4fc1ff">newCtx</span><span style="color:#cccccc">: </span><span style="color:#4ec9b0">Term</span><span style="color:#da70d6">)</span><span style="color:#cccccc"> :: </span><span style="color:#4ec9b0">Nil</span><span style="color:#ffd700">)</span><span style="color:#cccccc"> =&gt;</span></div>
<div style="left:134px;top:432px;width:1.5px;height:36px;background:#404040;"></div>
<div style="left:162px;top:432px;width:1.5px;height:36px;background:#404040;"></div>
<div style="left:191px;top:432px;width:1.5px;height:36px;background:#404040;"></div>
<div style="left:220px;top:432px;width:1.5px;height:36px;background:#404040;"></div>
<div style="left:249px;top:432px;width:1.5px;height:36px;background:#404040;"></div>
<div style="left:278px;top:432px;width:1.5px;height:36px;background:#404040;"></div>
<div style="left:306px;top:432px;width:1.5px;height:36px;background:#404040;"></div>
<div style="left:335px;top:432px;width:1.5px;height:36px;background:#404040;"></div>
<div style="left:364px;top:432px;width:1.5px;height:36px;background:#404040;"></div>
<div style="left:393px;top:432px;width:1.5px;height:36px;background:#404040;"></div>
<div style="left:422px;top:432px;width:1.5px;height:36px;background:#404040;"></div>
<div style="left:80px;top:437.10px;font-family:'Liberation Mono', monospace;font-size:24px;line-height:33px;color:#6e7681;white-space:pre;transform:translateX(-100%);">75</div>
<div style="left:451.39999999999986px;top:437.10px;font-family:'Liberation Mono', monospace;font-size:24px;line-height:33px;color:#cccccc;white-space:pre;"><span style="color:#dcdcaa">replaceWithNewCtx</span><span style="color:#ffd700">(</span><span style="color:#4fc1ff">newCtx</span><span style="color:#ffd700">)</span><span style="color:#cccccc">.</span><span style="color:#dcdcaa">transformTerm</span><span style="color:#ffd700">(</span><span style="color:#4fc1ff">value</span><span style="color:#cccccc">.</span><span style="color:#dcdcaa">asTerm</span><span style="color:#ffd700">)</span><span style="color:#ffd700">(</span><span style="color:#4fc1ff">methSym</span><span style="color:#ffd700">)</span></div>
<div style="left:134px;top:468px;width:1.5px;height:36px;background:#404040;"></div>
<div style="left:162px;top:468px;width:1.5px;height:36px;background:#404040;"></div>
<div style="left:191px;top:468px;width:1.5px;height:36px;background:#404040;"></div>
<div style="left:220px;top:468px;width:1.5px;height:36px;background:#404040;"></div>
<div style="left:249px;top:468px;width:1.5px;height:36px;background:#404040;"></div>
<div style="left:278px;top:468px;width:1.5px;height:36px;background:#404040;"></div>
<div style="left:306px;top:468px;width:1.5px;height:36px;background:#404040;"></div>
<div style="left:335px;top:468px;width:1.5px;height:36px;background:#404040;"></div>
<div style="left:364px;top:468px;width:1.5px;height:36px;background:#404040;"></div>
<div style="left:80px;top:473.10px;font-family:'Liberation Mono', monospace;font-size:24px;line-height:33px;color:#6e7681;white-space:pre;transform:translateX(-100%);">76</div>
<div style="left:393.79999999999995px;top:473.10px;font-family:'Liberation Mono', monospace;font-size:24px;line-height:33px;color:#cccccc;white-space:pre;"><span style="color:#ffd700">(</span><span style="color:#4fc1ff">tokenInfo</span><span style="color:#cccccc">, </span><span style="color:#cccccc">&#x27;</span><span style="color:#da70d6">{</span><span style="color:#cccccc"> </span><span style="color:#4ec9b0">DefinedToken</span><span style="color:#179fff">[</span><span style="color:#4ec9b0">name</span><span style="color:#cccccc">, </span><span style="color:#4ec9b0">Ctx</span><span style="color:#cccccc">, </span><span style="color:#4ec9b0">result</span><span style="color:#179fff">]</span><span style="color:#179fff">(</span><span style="color:#c586c0">$</span><span style="color:#ffd700">{</span><span style="color:#cccccc"> </span><span style="color:#4ec9b0">Expr</span><span style="color:#da70d6">(</span><span style="color:#4fc1ff">tokenInfo</span><span style="color:#da70d6">)</span><span style="color:#cccccc"> </span><span style="color:#ffd700">}</span><span style="color:#cccccc">, $ctxManipulation, $remapping</span><span style="color:#179fff">)</span><span style="color:#da70d6">}</span></div>
<div style="left:134px;top:504px;width:1.5px;height:36px;background:#404040;"></div>
<div style="left:162px;top:504px;width:1.5px;height:36px;background:#404040;"></div>
<div style="left:191px;top:504px;width:1.5px;height:36px;background:#404040;"></div>
<div style="left:220px;top:504px;width:1.5px;height:36px;background:#404040;"></div>
<div style="left:249px;top:504px;width:1.5px;height:36px;background:#404040;"></div>
<div style="left:278px;top:504px;width:1.5px;height:36px;background:#404040;"></div>
<div style="left:80px;top:509.10px;font-family:'Liberation Mono', monospace;font-size:24px;line-height:33px;color:#6e7681;white-space:pre;transform:translateX(-100%);">77</div>
<div style="left:307.39999999999986px;top:509.10px;font-family:'Liberation Mono', monospace;font-size:24px;line-height:33px;color:#cccccc;white-space:pre;"><span style="color:#c586c0">case</span><span style="color:#cccccc"> </span><span style="color:#ffd700">(</span><span style="color:#4fc1ff">_</span><span style="color:#cccccc">, </span><span style="color:#4fc1ff">tokenInfo</span><span style="color:#ffd700">)</span><span style="color:#cccccc"> =&gt;</span></div>
<div style="left:134px;top:540px;width:1.5px;height:36px;background:#404040;"></div>
<div style="left:162px;top:540px;width:1.5px;height:36px;background:#404040;"></div>
<div style="left:191px;top:540px;width:1.5px;height:36px;background:#404040;"></div>
<div style="left:220px;top:540px;width:1.5px;height:36px;background:#404040;"></div>
<div style="left:249px;top:540px;width:1.5px;height:36px;background:#404040;"></div>
<div style="left:278px;top:540px;width:1.5px;height:36px;background:#404040;"></div>
<div style="left:306px;top:540px;width:1.5px;height:36px;background:#404040;"></div>
<div style="left:80px;top:545.10px;font-family:'Liberation Mono', monospace;font-size:24px;line-height:33px;color:#6e7681;white-space:pre;transform:translateX(-100%);">78</div>
<div style="left:336.1999999999998px;top:545.10px;font-family:'Liberation Mono', monospace;font-size:24px;line-height:33px;color:#cccccc;white-space:pre;"><span style="color:#dcdcaa">raiseShouldNeverBeCalled</span><span style="color:#ffd700">[</span><span style="color:#da70d6">(</span><span style="color:#4ec9b0">TokenInfo</span><span style="color:#cccccc">, </span><span style="color:#4ec9b0">Expr</span><span style="color:#179fff">[</span><span style="color:#4ec9b0">Token</span><span style="color:#ffd700">[</span><span style="color:#cccccc">?, </span><span style="color:#4ec9b0">Ctx</span><span style="color:#cccccc">, ?</span><span style="color:#ffd700">]</span><span style="color:#179fff">]</span><span style="color:#da70d6">)</span><span style="color:#ffd700">]</span><span style="color:#ffd700">(</span><span style="color:#4fc1ff">tokenInfo</span><span style="color:#ffd700">)</span></div>
<div style="left:134px;top:576px;width:1.5px;height:36px;background:#404040;"></div>
<div style="left:162px;top:576px;width:1.5px;height:36px;background:#404040;"></div>
<div style="left:191px;top:576px;width:1.5px;height:36px;background:#404040;"></div>
<div style="left:220px;top:576px;width:1.5px;height:36px;background:#404040;"></div>
<div style="left:80px;top:581.10px;font-family:'Liberation Mono', monospace;font-size:24px;line-height:33px;color:#6e7681;white-space:pre;transform:translateX(-100%);">79</div>
<div style="left:134px;top:612px;width:1.5px;height:36px;background:#404040;"></div>
<div style="left:162px;top:612px;width:1.5px;height:36px;background:#404040;"></div>
<div style="left:191px;top:612px;width:1.5px;height:36px;background:#404040;"></div>
<div style="left:80px;top:617.10px;font-family:'Liberation Mono', monospace;font-size:24px;line-height:33px;color:#6e7681;white-space:pre;transform:translateX(-100%);">80</div>
<div style="left:221.0px;top:617.10px;font-family:'Liberation Mono', monospace;font-size:24px;line-height:33px;color:#cccccc;white-space:pre;"><span style="color:#4ec9b0">logger</span><span style="color:#cccccc">.</span><span style="color:#dcdcaa">trace</span><span style="color:#ffd700">(</span><span style="color:#ce9178">&quot;extracting tokens from body&quot;</span><span style="color:#ffd700">)</span></div>
<div style="left:134px;top:648px;width:1.5px;height:36px;background:#404040;"></div>
<div style="left:162px;top:648px;width:1.5px;height:36px;background:#404040;"></div>
<div style="left:191px;top:648px;width:1.5px;height:36px;background:#404040;"></div>
<div style="left:80px;top:653.10px;font-family:'Liberation Mono', monospace;font-size:24px;line-height:33px;color:#6e7681;white-space:pre;transform:translateX(-100%);">81</div>
<div style="left:221.0px;top:653.10px;font-family:'Liberation Mono', monospace;font-size:24px;line-height:33px;color:#cccccc;white-space:pre;"><span style="color:#c586c0">val</span><span style="color:#cccccc"> </span><span style="color:#ffd700">(</span><span style="color:#4fc1ff">infos</span><span style="color:#cccccc">, </span><span style="color:#4fc1ff">tokens</span><span style="color:#ffd700">)</span><span style="color:#cccccc"> = </span><span style="color:#dcdcaa">extractSimple</span><span style="color:#ffd700">(</span><span style="color:#cccccc">&#x27;</span><span style="color:#da70d6">{</span><span style="color:#cccccc"> </span><span style="color:#4fc1ff">_</span><span style="color:#cccccc"> =&gt; </span><span style="color:#179fff">()</span><span style="color:#cccccc"> </span><span style="color:#da70d6">}</span><span style="color:#ffd700">)</span></div>
<div style="left:134px;top:684px;width:1.5px;height:36px;background:#404040;"></div>
<div style="left:162px;top:684px;width:1.5px;height:36px;background:#404040;"></div>
<div style="left:191px;top:684px;width:1.5px;height:36px;background:#404040;"></div>
<div style="left:220px;top:684px;width:1.5px;height:36px;background:#6e6e6e;"></div>
<div style="left:80px;top:689.10px;font-family:'Liberation Mono', monospace;font-size:24px;line-height:33px;color:#6e7681;white-space:pre;transform:translateX(-100%);">82</div>
<div style="left:249.79999999999995px;top:689.10px;font-family:'Liberation Mono', monospace;font-size:24px;line-height:33px;color:#cccccc;white-space:pre;"><span style="color:#cccccc">.</span><span style="color:#dcdcaa">lift</span><span style="color:#ffd700">(</span><span style="color:#4fc1ff">body</span><span style="color:#cccccc">.</span><span style="color:#dcdcaa">asExprOf</span><span style="color:#da70d6">[</span><span style="color:#4ec9b0">TokenDef</span><span style="color:#179fff">[</span><span style="color:#4ec9b0">ValidName</span><span style="color:#cccccc">, </span><span style="color:#4ec9b0">Ctx</span><span style="color:#cccccc">, </span><span style="color:#4ec9b0">Any</span><span style="color:#179fff">]</span><span style="color:#da70d6">]</span><span style="color:#ffd700">)</span></div>
<div style="left:134px;top:720px;width:1.5px;height:36px;background:#404040;"></div>
<div style="left:162px;top:720px;width:1.5px;height:36px;background:#404040;"></div>
<div style="left:191px;top:720px;width:1.5px;height:36px;background:#404040;"></div>
<div style="left:220px;top:720px;width:1.5px;height:36px;background:#6e6e6e;"></div>
<div style="left:80px;top:725.10px;font-family:'Liberation Mono', monospace;font-size:24px;line-height:33px;color:#6e7681;white-space:pre;transform:translateX(-100%);">83</div>
<div style="left:293.0px;top:725.10px;font-family:'Liberation Mono', monospace;font-size:24px;line-height:33px;color:#cccccc;white-space:pre;"><span style="color:#dcdcaa">[]</span></div>
</div>
<div style="left:1358px;top:442px;width:17px;height:17px;border-radius:9px;background:#e51400"></div>
<div style="left:1347px;top:250px;width:1761px;height:144px;background:#1f1f1f;box-shadow:0 4px 5px -2px rgba(0,0,0,0.8)"></div>
<div style="left:1427px;top:253.10px;font-family:'Liberation Mono', monospace;font-size:24px;line-height:33px;color:#6e7681;white-space:pre;transform:translateX(-100%);">1</div>
<div style="left:1481.6px;top:253.10px;font-family:'Liberation Mono', monospace;font-size:24px;line-height:33px;color:#cccccc;white-space:pre;"><span style="color:#c586c0">package</span><span style="color:#cccccc"> </span><span style="color:#4ec9b0">alpaca</span></div>
<div style="left:1427px;top:289.10px;font-family:'Liberation Mono', monospace;font-size:24px;line-height:33px;color:#6e7681;white-space:pre;transform:translateX(-100%);">2</div>
<div style="left:1481.6px;top:289.10px;font-family:'Liberation Mono', monospace;font-size:24px;line-height:33px;color:#cccccc;white-space:pre;"><span style="color:#c586c0">package</span><span style="color:#cccccc"> </span><span style="color:#4ec9b0">internal</span></div>
<div style="left:1427px;top:325.10px;font-family:'Liberation Mono', monospace;font-size:24px;line-height:33px;color:#6e7681;white-space:pre;transform:translateX(-100%);">3</div>
<div style="left:1481.6px;top:325.10px;font-family:'Liberation Mono', monospace;font-size:24px;line-height:33px;color:#cccccc;white-space:pre;"><span style="color:#c586c0">package</span><span style="color:#cccccc"> </span><span style="color:#4ec9b0">lexer</span></div>
<div style="left:1427px;top:361.10px;font-family:'Liberation Mono', monospace;font-size:24px;line-height:33px;color:#6e7681;white-space:pre;transform:translateX(-100%);">13</div>
<div style="left:1481.6px;top:361.10px;font-family:'Liberation Mono', monospace;font-size:24px;line-height:33px;color:#cccccc;white-space:pre;"><span style="color:#c586c0">def</span><span style="color:#cccccc"> </span><span style="color:#dcdcaa">lexerImpl</span><span style="color:#ffd700">[</span><span style="color:#4ec9b0">Ctx</span><span style="color:#cccccc"> &lt;: </span><span style="color:#4ec9b0">LexerCtx</span><span style="color:#cccccc">: </span><span style="color:#4ec9b0">Type</span><span style="color:#cccccc">, </span><span style="color:#4ec9b0">lexemeFields</span><span style="color:#cccccc"> &lt;: </span><span style="color:#4ec9b0">AnyNamedTuple</span><span style="color:#cccccc">: </span><span style="color:#4ec9b0">Type</span><span style="color:#ffd700">]</span><span style="color:#ffd700">(</span></div>
<div style="left:3097px;top:287.10px;font-family:'Liberation Mono', monospace;font-size:24px;line-height:33px;color:#dcdcaa;white-space:pre;clip-path:inset(0 0 0 12px);">ymb</div>
<div style="left:3109px;top:674px;width:26px;height:12px;background:#575b30;"></div>
<div style="left:3109px;top:676px;width:26px;height:4px;background:#b3b197;"></div>
<div style="left:1347px;top:1129px;width:1788px;height:803px;background:#181818;"></div>
<div style="left:1347px;top:1128px;width:1788px;height:1.5px;background:#2b2b2b;"></div>
<div style="left:1389px;top:1145.99px;font-family:'Liberation Sans', sans-serif;font-size:26px;line-height:36px;color:#9d9d9d;white-space:pre;letter-spacing:-0.229px;">Problems</div>
<div style="left:1546px;top:1145.99px;font-family:'Liberation Sans', sans-serif;font-size:26px;line-height:36px;color:#9d9d9d;white-space:pre;letter-spacing:0.156px;">Output</div>
<div style="left:1674px;top:1145.99px;font-family:'Liberation Sans', sans-serif;font-size:26px;line-height:36px;color:#9d9d9d;white-space:pre;letter-spacing:-0.326px;">Debug Console</div>
<div style="left:1882px;top:1140px;width:130px;height:47px;border-radius:8px;background:#2a2a2a"></div>
<div style="left:1899px;top:1145.99px;font-family:'Liberation Sans', sans-serif;font-size:26px;line-height:36px;color:#e7e7e7;white-space:pre;font-weight:700;-webkit-text-stroke:0.15px currentColor;letter-spacing:-1.242px;">Terminal</div>
<div style="left:2046px;top:1145.99px;font-family:'Liberation Sans', sans-serif;font-size:26px;line-height:36px;color:#9d9d9d;white-space:pre;letter-spacing:-0.217px;">Test Results</div>
<div style="left:2234px;top:1145.99px;font-family:'Liberation Sans', sans-serif;font-size:26px;line-height:36px;color:#9d9d9d;white-space:pre;letter-spacing:-0.338px;">Ports</div>
<svg style="left:2606px;top:1150px;" width="30" height="30" viewBox="0 0 30 30" fill="none"><rect x="1.5" y="1.5" width="27" height="27" rx="3" stroke="#cccccc" stroke-width="2.2" fill="none" stroke-linecap="round" stroke-linejoin="round"/><path d="M7 9L13 15L7 21M15 22H23" stroke="#cccccc" stroke-width="2.2" fill="none" stroke-linecap="round" stroke-linejoin="round"/></svg>
<div style="left:2645px;top:1146.99px;font-family:'Liberation Sans', sans-serif;font-size:26px;line-height:36px;color:#cccccc;white-space:pre;letter-spacing:-0.676px;">java</div>
<svg style="left:2709px;top:1149px;" width="32" height="32" viewBox="0 0 32 32" fill="none"><path d="M16 3V29M3 16H29" stroke="#cccccc" stroke-width="2.2" fill="none" stroke-linecap="round" stroke-linejoin="round"/></svg>
<svg style="left:2747px;top:1156px;" width="22" height="18" viewBox="0 0 22 18" fill="none"><path d="M3 5L11 13L19 5" stroke="#cccccc" stroke-width="2" fill="none" stroke-linecap="round"/></svg>
<div style="left:2787px;top:1142.91px;font-family:'Liberation Sans', sans-serif;font-size:32px;line-height:44px;color:#cccccc;white-space:pre;">@</div>
<svg style="left:2842px;top:1150px;" width="30" height="30" viewBox="0 0 30 30" fill="none"><rect x="2" y="2" width="26" height="26" rx="2" stroke="#cccccc" stroke-width="2.2" fill="none" stroke-linecap="round" stroke-linejoin="round"/><path d="M15 2V28" stroke="#cccccc" stroke-width="2.2" fill="none" stroke-linecap="round" stroke-linejoin="round"/></svg>
<svg style="left:2892px;top:1148px;" width="28" height="34" viewBox="0 0 28 34" fill="none"><path d="M3 7H25M10 7V3H18V7M6 7L7 31H21L22 7M11 12V26M14 12V26M17 12V26" stroke="#cccccc" stroke-width="2.2" fill="none" stroke-linecap="round" stroke-linejoin="round"/></svg>
<div style="left:2947px;top:1163px;width:5px;height:5px;border-radius:3px;background:#cccccc"></div>
<div style="left:2958px;top:1163px;width:5px;height:5px;border-radius:3px;background:#cccccc"></div>
<div style="left:2969px;top:1163px;width:5px;height:5px;border-radius:3px;background:#cccccc"></div>
<div style="left:2998px;top:1149px;width:2px;height:32px;background:#555555;"></div>
<svg style="left:3023px;top:1150px;" width="30" height="28" viewBox="0 0 30 28" fill="none"><path d="M2 8V2H8M22 2H28V8M28 20V26H22M8 26H2V20" stroke="#cccccc" stroke-width="2.2" fill="none" stroke-linecap="round" stroke-linejoin="round"/><rect x="7" y="8" width="16" height="12" stroke="#cccccc" stroke-width="3.5" fill="none"/></svg>
<svg style="left:3078px;top:1153px;" width="24" height="24" viewBox="0 0 24 24" fill="none"><path d="M3.5 3.5L20.5 20.5M20.5 3.5L3.5 20.5" stroke="#cccccc" stroke-width="2.2" fill="none" stroke-linecap="round" stroke-linejoin="round"/></svg>
<div style="left:3045px;top:1199px;width:1.5px;height:733px;background:#2b2b2b;"></div>
<div style="left:3046px;top:1242px;width:89px;height:44px;background:#37373d;"></div>
<div style="left:3046px;top:1242px;width:2px;height:44px;background:#0078d4;"></div>
<svg style="left:3076px;top:1205px;" width="29" height="29" viewBox="0 0 29 29" fill="none"><rect x="1.5" y="1.5" width="26" height="26" rx="3" stroke="#cccccc" stroke-width="1.8" fill="none"/><path d="M7 9L13 14.5L7 20M15 21H22" stroke="#cccccc" stroke-width="1.8" fill="none" stroke-linecap="round"/></svg>
<svg style="left:3076px;top:1250px;" width="29" height="29" viewBox="0 0 29 29" fill="none"><rect x="1.5" y="1.5" width="26" height="26" rx="3" stroke="#cccccc" stroke-width="1.8" fill="none"/><path d="M7 9L13 14.5L7 20M15 21H22" stroke="#cccccc" stroke-width="1.8" fill="none" stroke-linecap="round"/></svg>
<svg style="left:3076px;top:1295px;" width="29" height="29" viewBox="0 0 29 29" fill="none"><rect x="1.5" y="1.5" width="26" height="26" rx="3" stroke="#cccccc" stroke-width="1.8" fill="none"/><path d="M7 9L13 14.5L7 20M15 21H22" stroke="#cccccc" stroke-width="1.8" fill="none" stroke-linecap="round"/></svg>
<div style="left:3016px;top:1202px;width:1.5px;height:730px;background:#0e0e0e;"></div>
<div style="left:3035px;top:1202px;width:9px;height:7px;background:#f14c4c;"></div>
<div style="left:3035px;top:1231px;width:9px;height:13px;background:#f14c4c;"></div>
<div style="left:3017px;top:1280px;width:9px;height:13px;background:#5a5a5a;"></div>
<div style="left:1388px;top:1258.38px;font-family:'Liberation Mono', monospace;font-size:23.33px;line-height:32px;color:#cccccc;white-space:pre;"><span style="color:#5596e6;">[152]</span><span style="color:#cccccc;"> [info] Lexer.scala                    126     1632     342   2.71  moderate    /Users/bartlomiejkozak/IdeaProj</span></div>
<div style="left:1388px;top:1286.38px;font-family:'Liberation Mono', monospace;font-size:23.33px;line-height:32px;color:#cccccc;white-space:pre;"><span style="color:#cccccc;">ects/alpaca/src/alpaca/internal/lexer</span></div>
<div style="left:1388px;top:1314.38px;font-family:'Liberation Mono', monospace;font-size:23.33px;line-height:32px;color:#cccccc;white-space:pre;"><span style="color:#5596e6;">[153]</span><span style="color:#cccccc;"> [info] Lexer.scala                    126     1632     342   2.71  moderate    /Users/bartlomiejkozak/IdeaProj</span></div>
<div style="left:1388px;top:1342.38px;font-family:'Liberation Mono', monospace;font-size:23.33px;line-height:32px;color:#cccccc;white-space:pre;"><span style="color:#cccccc;">ects/alpaca/src/alpaca/internal/lexer</span></div>
<div style="left:1388px;top:1370.38px;font-family:'Liberation Mono', monospace;font-size:23.33px;line-height:32px;color:#cccccc;white-space:pre;"><span style="color:#5596e6;">[153]</span><span style="color:#cccccc;"> [info] createTables.scala             148     1916     430   2.91  moderate    /Users/bartlomiejkozak/IdeaProj</span></div>
<div style="left:1388px;top:1398.38px;font-family:'Liberation Mono', monospace;font-size:23.33px;line-height:32px;color:#cccccc;white-space:pre;"><span style="color:#cccccc;">ects/alpaca/src/alpaca/internal/parser</span></div>
<div style="left:1388px;top:1426.38px;font-family:'Liberation Mono', monospace;font-size:23.33px;line-height:32px;color:#cccccc;white-space:pre;"><span style="color:#5596e6;">[152]</span><span style="color:#cccccc;"> [info] createTables.scala             148     1916     430   2.91  moderate    /Users/bartlomiejkozak/IdeaProj</span></div>
<div style="left:1388px;top:1454.38px;font-family:'Liberation Mono', monospace;font-size:23.33px;line-height:32px;color:#cccccc;white-space:pre;"><span style="color:#cccccc;">ects/alpaca/src/alpaca/internal/parser</span></div>
<div style="left:1388px;top:1482.38px;font-family:'Liberation Mono', monospace;font-size:23.33px;line-height:32px;color:#cccccc;white-space:pre;"><span style="color:#5596e6;">[152]</span><span style="color:#cccccc;"> [info] ---------------------------------------------------------------------</span></div>
<div style="left:1388px;top:1510.38px;font-family:'Liberation Mono', monospace;font-size:23.33px;line-height:32px;color:#cccccc;white-space:pre;"><span style="color:#5596e6;">[153]</span><span style="color:#cccccc;"> [info] ---------------------------------------------------------------------</span></div>
<div style="left:1388px;top:1538.38px;font-family:'Liberation Mono', monospace;font-size:23.33px;line-height:32px;color:#cccccc;white-space:pre;"><span style="color:#5596e6;">[152]</span><span style="color:#cccccc;"> [info] Total                         1019    12824    2588   2.54  moderate</span></div>
<div style="left:1388px;top:1566.38px;font-family:'Liberation Mono', monospace;font-size:23.33px;line-height:32px;color:#cccccc;white-space:pre;"><span style="color:#5596e6;">[153]</span><span style="color:#cccccc;"> [info] Total                         1019    12824    2588   2.54  moderate</span></div>
<div style="left:1388px;top:1594.38px;font-family:'Liberation Mono', monospace;font-size:23.33px;line-height:32px;color:#cccccc;white-space:pre;"><span style="color:#5596e6;">[153]</span><span style="color:#cccccc;"> [info] done compiling</span></div>
<div style="left:1388px;top:1622.38px;font-family:'Liberation Mono', monospace;font-size:23.33px;line-height:32px;color:#cccccc;white-space:pre;"><span style="color:#5596e6;">[152]</span><span style="color:#cccccc;"> [info] done compiling</span></div>
<div style="left:1388px;top:1650.38px;font-family:'Liberation Mono', monospace;font-size:23.33px;line-height:32px;color:#cccccc;white-space:pre;"><span style="color:#cccccc;">[159/167] ============================== test ============================== 110s</span></div>
<div style="left:1388px;top:1678.38px;font-family:'Liberation Mono', monospace;font-size:23.33px;line-height:32px;color:#cccccc;white-space:pre;"><span style="color:#cccccc;">[158] test.compile</span></div>
<div style="left:1388px;top:1734.38px;font-family:'Liberation Mono', monospace;font-size:23.33px;line-height:32px;color:#cccccc;white-space:pre;"><span style="color:#5596e6;">[158/167] test.compile</span></div>
<div style="left:1388px;top:1762.38px;font-family:'Liberation Mono', monospace;font-size:23.33px;line-height:32px;color:#cccccc;white-space:pre;"><span style="color:#5596e6;">[158]</span><span style="color:#cccccc;"> [info] compiling 24 Scala sources to /Users/bartlomiejkozak/IdeaProjects/alpaca/out/test/compile.dest/classes</span></div>
<div style="left:1388px;top:1790.38px;font-family:'Liberation Mono', monospace;font-size:23.33px;line-height:32px;color:#cccccc;white-space:pre;"><span style="color:#cccccc;">...</span></div>
<div style="left:1388px;top:1818.38px;font-family:'Liberation Mono', monospace;font-size:23.33px;line-height:32px;color:#cccccc;white-space:pre;"><span style="color:#cccccc;">[159/167] ============================== test ============================== 291s</span></div>
<div style="left:1388px;top:1846.38px;font-family:'Liberation Mono', monospace;font-size:23.33px;line-height:32px;color:#cccccc;white-space:pre;"><span style="color:#cccccc;">[158] test.compile 181s</span></div>
<div style="left:1388px;top:1873px;width:14px;height:25px;box-shadow:inset 0 0 0 2px #e0e0e0"></div>
<div style="left:1347px;top:1199px;width:1669px;height:57px;background:#181818;box-shadow:0 4px 5px -2px rgba(0,0,0,0.7)"></div>
<div style="left:1388px;top:1196.78px;font-family:'Liberation Mono', monospace;font-size:23.33px;line-height:32px;color:#cccccc;white-space:pre;"><span style="color:#f14c4c;font-weight:700;">➜</span><span style="color:#cccccc;">  </span><span style="color:#29b8db;font-weight:700;">alpaca</span><span style="color:#cccccc;"> </span><span style="color:#3b8eea;font-weight:700;">git:(</span><span style="color:#f14c4c;font-weight:700;">add-brainfuck-example</span><span style="color:#3b8eea;font-weight:700;">)</span><span style="color:#cccccc;"> </span><span style="color:#f5f543;font-weight:700;">✗</span><span style="color:#cccccc;"> JAVA_OPTS=&quot;-agentlib:jdwp=transport=dt_socket,server=y,suspend=y,address=50</span></div>
<div style="left:1388px;top:1225.28px;font-family:'Liberation Mono', monospace;font-size:23.33px;line-height:32px;color:#cccccc;white-space:pre;"><span style="color:#cccccc;">05&quot; mill -i test</span></div>
<div style="left:237px;top:165.68px;font-family:'Liberation Sans', sans-serif;font-size:24px;line-height:33px;color:#cccccc;white-space:pre;font-weight:700;-webkit-text-stroke:0.15px currentColor;letter-spacing:-0.179px;">Run and Debug</div>
<div style="left:798px;top:155px;width:419px;height:51px;border-radius:9px;background:#2b2b2b;box-shadow:inset 0 0 0 1.5px #343434"></div>
<div style="left:844px;top:156px;width:1.5px;height:49px;background:#3a3a3a;"></div>
<svg style="left:806px;top:164px;" width="34" height="34" viewBox="0 0 34 34" fill="none"><path d="M10 7L26 17L10 27Z" stroke="#89d185" stroke-width="2.4" fill="none" stroke-linejoin="round"/></svg>
<div style="left:862px;top:163.84px;font-family:'Liberation Sans', sans-serif;font-size:25px;line-height:35px;color:#cccccc;white-space:pre;letter-spacing:-0.651px;">Debug Macro (Compile-time)</div>
<svg style="left:1180px;top:170px;" width="24" height="22" viewBox="0 0 24 22" fill="none"><path d="M3 6L12 15L21 6" stroke="#cccccc" stroke-width="2.2" fill="none" stroke-linecap="round" stroke-linejoin="round"/></svg>
<svg style="left:1233px;top:166px" width="30" height="30" viewBox="0 0 30 30" fill="none"><path d="M28.04 12.94 L28.04 17.06 L24.59 17.46 L23.52 20.04 L25.68 22.76 L22.76 25.68 L20.04 23.52 L17.46 24.59 L17.06 28.04 L12.94 28.04 L12.54 24.59 L9.96 23.52 L7.24 25.68 L4.32 22.76 L6.48 20.04 L5.41 17.46 L1.96 17.06 L1.96 12.94 L5.41 12.54 L6.48 9.96 L4.32 7.24 L7.24 4.32 L9.96 6.48 L12.54 5.41 L12.94 1.96 L17.06 1.96 L17.46 5.41 L20.04 6.48 L22.76 4.32 L25.68 7.24 L23.52 9.96 L24.59 12.54Z" stroke="#cccccc" stroke-width="2.2" stroke-linejoin="round"/><circle cx="15.0" cy="15.0" r="3.5999999999999996" stroke="#cccccc" stroke-width="2.2"/></svg>
<div style="left:1287px;top:179px;width:5px;height:5px;border-radius:3px;background:#cccccc"></div>
<div style="left:1299px;top:179px;width:5px;height:5px;border-radius:3px;background:#cccccc"></div>
<div style="left:1311px;top:179px;width:5px;height:5px;border-radius:3px;background:#cccccc"></div>
<svg style="left:205px;top:227.0px;" width="22" height="22" viewBox="0 0 22 22" fill="none"><path d="M2.2 6.6L11.0 15.8L19.8 6.6" stroke="#cccccc" stroke-width="2.2" fill="none" stroke-linecap="round" stroke-linejoin="round"/></svg>
<div style="left:237px;top:222.18px;font-family:'Liberation Sans', sans-serif;font-size:24px;line-height:33px;color:#cccccc;white-space:pre;font-weight:700;-webkit-text-stroke:0.15px currentColor;letter-spacing:-0.158px;">Variables</div>
<div style="left:195px;top:262px;width:1151px;height:640px;overflow:hidden">
<div style="left:155px;top:216px;width:995px;height:30px;background:#2d4156"></div>
<div style="left:234px;top:260px;width:916px;height:30px;background:#2d4156"></div>
<div style="left:234px;top:304px;width:674px;height:30px;background:#2d4156"></div>
<div style="left:221px;top:348px;width:634px;height:30px;background:#2d4156"></div>
<div style="left:168px;top:392px;width:687px;height:30px;background:#2d4156"></div>
<svg style="left:44px;top:65.0px;" width="22" height="22" viewBox="0 0 22 22" fill="none"><path d="M6.6 2.2L15.8 11.0L6.6 19.8" stroke="#cccccc" stroke-width="2.2" fill="none" stroke-linecap="round" stroke-linejoin="round"/></svg>
<div style="left:78px;top:65.14px;font-family:'Liberation Mono', monospace;font-size:22px;line-height:30px;color:#c586c0;white-space:pre;">evidence$1$16</div>
<div style="left:249.60000000000002px;top:65.14px;font-family:'Liberation Mono', monospace;font-size:22px;line-height:30px;color:#cccccc;white-space:pre;"> = </div>
<div style="left:289.20000000000005px;top:65.14px;font-family:'Liberation Mono', monospace;font-size:22px;line-height:30px;color:#b4b4b4;white-space:pre;">TypeImpl@20607</div>
<svg style="left:44px;top:109.0px;" width="22" height="22" viewBox="0 0 22 22" fill="none"><path d="M6.6 2.2L15.8 11.0L6.6 19.8" stroke="#cccccc" stroke-width="2.2" fill="none" stroke-linecap="round" stroke-linejoin="round"/></svg>
<div style="left:78px;top:109.14px;font-family:'Liberation Mono', monospace;font-size:22px;line-height:30px;color:#c586c0;white-space:pre;">createLambda$1</div>
<div style="left:262.79999999999995px;top:109.14px;font-family:'Liberation Mono', monospace;font-size:22px;line-height:30px;color:#cccccc;white-space:pre;"> = </div>
<div style="left:302.4px;top:109.14px;font-family:'Liberation Mono', monospace;font-size:22px;line-height:30px;color:#b4b4b4;white-space:pre;">CreateLambda@20614</div>
<svg style="left:44px;top:153.0px;" width="22" height="22" viewBox="0 0 22 22" fill="none"><path d="M6.6 2.2L15.8 11.0L6.6 19.8" stroke="#cccccc" stroke-width="2.2" fill="none" stroke-linecap="round" stroke-linejoin="round"/></svg>
<div style="left:78px;top:153.14px;font-family:'Liberation Mono', monospace;font-size:22px;line-height:30px;color:#c586c0;white-space:pre;">evidence$2$5</div>
<div style="left:236.39999999999998px;top:153.14px;font-family:'Liberation Mono', monospace;font-size:22px;line-height:30px;color:#cccccc;white-space:pre;"> = </div>
<div style="left:276.0px;top:153.14px;font-family:'Liberation Mono', monospace;font-size:22px;line-height:30px;color:#b4b4b4;white-space:pre;">TypeImpl@20608</div>
<svg style="left:44px;top:197.0px;" width="22" height="22" viewBox="0 0 22 22" fill="none"><path d="M6.6 2.2L15.8 11.0L6.6 19.8" stroke="#cccccc" stroke-width="2.2" fill="none" stroke-linecap="round" stroke-linejoin="round"/></svg>
<div style="left:155px;top:186px;width:995px;height:44px;background:#2d4156;border-radius:7px"></div>
<div style="left:78px;top:197.14px;font-family:'Liberation Mono', monospace;font-size:22px;line-height:30px;color:#c586c0;white-space:pre;">x$1</div>
<div style="left:117.60000000000002px;top:197.14px;font-family:'Liberation Mono', monospace;font-size:22px;line-height:30px;color:#cccccc;white-space:pre;"> = </div>
<div style="left:157.20000000000005px;top:197.14px;font-family:'Liberation Mono', monospace;font-size:22px;line-height:30px;color:#c4c4c4;white-space:pre;">Tuple2@21317 &quot;(List((scala.quoted.runtime.impl.ExprImpl@6ea1acf1,\s+)),Lis…</div>
<svg style="left:44px;top:241.0px;" width="22" height="22" viewBox="0 0 22 22" fill="none"><path d="M6.6 2.2L15.8 11.0L6.6 19.8" stroke="#cccccc" stroke-width="2.2" fill="none" stroke-linecap="round" stroke-linejoin="round"/></svg>
<div style="left:155px;top:230px;width:995px;height:44px;background:#2d4156;border-radius:7px"></div>
<div style="left:78px;top:241.14px;font-family:'Liberation Mono', monospace;font-size:22px;line-height:30px;color:#c586c0;white-space:pre;">x$2</div>
<div style="left:117.60000000000002px;top:241.14px;font-family:'Liberation Mono', monospace;font-size:22px;line-height:30px;color:#cccccc;white-space:pre;"> = </div>
<div style="left:157.20000000000005px;top:241.14px;font-family:'Liberation Mono', monospace;font-size:22px;line-height:30px;color:#c4c4c4;white-space:pre;">Trees$CaseDef@21318 &quot;CaseDef(Bind(x,Literal(Constant([0-9]+))),EmptyTree,A…</div>
<svg style="left:44px;top:285.0px;" width="22" height="22" viewBox="0 0 22 22" fill="none"><path d="M6.6 2.2L15.8 11.0L6.6 19.8" stroke="#cccccc" stroke-width="2.2" fill="none" stroke-linecap="round" stroke-linejoin="round"/></svg>
<div style="left:234px;top:274px;width:916px;height:44px;background:#2d4156;border-radius:7px"></div>
<div style="left:78px;top:285.14px;font-family:'Liberation Mono', monospace;font-size:22px;line-height:30px;color:#c586c0;white-space:pre;">accTokens</div>
<div style="left:196.8px;top:285.14px;font-family:'Liberation Mono', monospace;font-size:22px;line-height:30px;color:#cccccc;white-space:pre;"> = </div>
<div style="left:236.39999999999998px;top:285.14px;font-family:'Liberation Mono', monospace;font-size:22px;line-height:30px;color:#c4c4c4;white-space:pre;">$colon$colon@21319 &quot;List((scala.quoted.runtime.impl.ExprImpl@6ea1acf…</div>
<svg style="left:44px;top:329.0px;" width="22" height="22" viewBox="0 0 22 22" fill="none"><path d="M6.6 2.2L15.8 11.0L6.6 19.8" stroke="#cccccc" stroke-width="2.2" fill="none" stroke-linecap="round" stroke-linejoin="round"/></svg>
<div style="left:221px;top:318px;width:687px;height:44px;background:#2d4156;border-radius:7px"></div>
<div style="left:78px;top:329.14px;font-family:'Liberation Mono', monospace;font-size:22px;line-height:30px;color:#c586c0;white-space:pre;">accInfos</div>
<div style="left:183.60000000000002px;top:329.14px;font-family:'Liberation Mono', monospace;font-size:22px;line-height:30px;color:#cccccc;white-space:pre;"> = </div>
<div style="left:223.20000000000005px;top:329.14px;font-family:'Liberation Mono', monospace;font-size:22px;line-height:30px;color:#c4c4c4;white-space:pre;">$colon$colon@20920 &quot;List(TokenInfo(\s+,token0,\s+))&quot;</div>
<svg style="left:44px;top:373.0px;" width="22" height="22" viewBox="0 0 22 22" fill="none"><path d="M6.6 2.2L15.8 11.0L6.6 19.8" stroke="#cccccc" stroke-width="2.2" fill="none" stroke-linecap="round" stroke-linejoin="round"/></svg>
<div style="left:168px;top:362px;width:687px;height:44px;background:#2d4156;border-radius:7px"></div>
<div style="left:78px;top:373.14px;font-family:'Liberation Mono', monospace;font-size:22px;line-height:30px;color:#c586c0;white-space:pre;">tree</div>
<div style="left:130.8px;top:373.14px;font-family:'Liberation Mono', monospace;font-size:22px;line-height:30px;color:#cccccc;white-space:pre;"> = </div>
<div style="left:170.39999999999998px;top:373.14px;font-family:'Liberation Mono', monospace;font-size:22px;line-height:30px;color:#c4c4c4;white-space:pre;">Trees$Bind@21320 &quot;Bind(x,Literal(Constant([0-9]+)))&quot;</div>
<svg style="left:44px;top:417.0px;" width="22" height="22" viewBox="0 0 22 22" fill="none"><path d="M2.2 6.6L11.0 15.8L19.8 6.6" stroke="#cccccc" stroke-width="2.2" fill="none" stroke-linecap="round" stroke-linejoin="round"/></svg>
<div style="left:168px;top:406px;width:982px;height:44px;background:#2d4156;border-radius:7px"></div>
<div style="left:78px;top:417.14px;font-family:'Liberation Mono', monospace;font-size:22px;line-height:30px;color:#c586c0;white-space:pre;">body</div>
<div style="left:130.8px;top:417.14px;font-family:'Liberation Mono', monospace;font-size:22px;line-height:30px;color:#cccccc;white-space:pre;"> = </div>
<div style="left:170.39999999999998px;top:417.14px;font-family:'Liberation Mono', monospace;font-size:22px;line-height:30px;color:#c4c4c4;white-space:pre;">Trees$Apply@21321 &quot;Apply(Apply(TypeApply(Select(Ident(Token),apply),List(…</div>
<svg style="left:59px;top:461.0px;" width="22" height="22" viewBox="0 0 22 22" fill="none"><path d="M6.6 2.2L15.8 11.0L6.6 19.8" stroke="#cccccc" stroke-width="2.2" fill="none" stroke-linecap="round" stroke-linejoin="round"/></svg>
<div style="left:94px;top:461.14px;font-family:'Liberation Mono', monospace;font-size:22px;line-height:30px;color:#c586c0;white-space:pre;">args</div>
<div style="left:146.8px;top:461.14px;font-family:'Liberation Mono', monospace;font-size:22px;line-height:30px;color:#cccccc;white-space:pre;"> = </div>
<div style="left:186.39999999999998px;top:461.14px;font-family:'Liberation Mono', monospace;font-size:22px;line-height:30px;color:#b4b4b4;white-space:pre;">$colon$colon@21333 &quot;List(Ident(contextual$1))&quot;</div>
<svg style="left:59px;top:505.0px;" width="22" height="22" viewBox="0 0 22 22" fill="none"><path d="M6.6 2.2L15.8 11.0L6.6 19.8" stroke="#cccccc" stroke-width="2.2" fill="none" stroke-linecap="round" stroke-linejoin="round"/></svg>
<div style="left:94px;top:505.14px;font-family:'Liberation Mono', monospace;font-size:22px;line-height:30px;color:#c586c0;white-space:pre;">fun</div>
<div style="left:133.60000000000002px;top:505.14px;font-family:'Liberation Mono', monospace;font-size:22px;line-height:30px;color:#cccccc;white-space:pre;"> = </div>
<div style="left:173.20000000000005px;top:505.14px;font-family:'Liberation Mono', monospace;font-size:22px;line-height:30px;color:#b4b4b4;white-space:pre;">Trees$Apply@21334 &quot;Apply(TypeApply(Select(Ident(Token),apply),List(Singl…</div>
<svg style="left:59px;top:549.0px;" width="22" height="22" viewBox="0 0 22 22" fill="none"><path d="M6.6 2.2L15.8 11.0L6.6 19.8" stroke="#cccccc" stroke-width="2.2" fill="none" stroke-linecap="round" stroke-linejoin="round"/></svg>
<div style="left:94px;top:549.14px;font-family:'Liberation Mono', monospace;font-size:22px;line-height:30px;color:#c586c0;white-space:pre;">mySource</div>
<div style="left:199.60000000000002px;top:549.14px;font-family:'Liberation Mono', monospace;font-size:22px;line-height:30px;color:#cccccc;white-space:pre;"> = </div>
<div style="left:239.20000000000005px;top:549.14px;font-family:'Liberation Mono', monospace;font-size:22px;line-height:30px;color:#b4b4b4;white-space:pre;">SourceFile@20664 &quot;/Users/bartlomiejkozak/IdeaProjects/alpaca/test/sr…</div>
<div style="left:94px;top:593.14px;font-family:'Liberation Mono', monospace;font-size:22px;line-height:30px;color:#c586c0;white-space:pre;">mySpan</div>
<div style="left:173.2px;top:593.14px;font-family:'Liberation Mono', monospace;font-size:22px;line-height:30px;color:#cccccc;white-space:pre;"> = </div>
<div style="left:212.79999999999995px;top:593.14px;font-family:'Liberation Mono', monospace;font-size:22px;line-height:30px;color:#b5cea8;white-space:pre;">-4503573723348627</div>
<svg style="left:59px;top:637.0px;" width="22" height="22" viewBox="0 0 22 22" fill="none"><path d="M6.6 2.2L15.8 11.0L6.6 19.8" stroke="#cccccc" stroke-width="2.2" fill="none" stroke-linecap="round" stroke-linejoin="round"/></svg>
<div style="left:94px;top:637.14px;font-family:'Liberation Mono', monospace;font-size:22px;line-height:30px;color:#c586c0;white-space:pre;">myTpe</div>
<div style="left:160.0px;top:637.14px;font-family:'Liberation Mono', monospace;font-size:22px;line-height:30px;color:#cccccc;white-space:pre;"> = </div>
<div style="left:199.60000000000002px;top:637.14px;font-family:'Liberation Mono', monospace;font-size:22px;line-height:30px;color:#b4b4b4;white-space:pre;">Types$TypeRef@21335 &quot;TypeRef(TermRef(ThisType(TypeRef(NoPrefix,module cl…</div>
<div style="left:49px;top:450px;width:1.5px;height:200px;background:#585858;"></div>
</div>
<div style="left:195px;top:262px;width:1151px;height:42px;background:#181818;box-shadow:0 4px 4px -2px rgba(0,0,0,0.6)"></div>
<svg style="left:224px;top:270.0px;" width="22" height="22" viewBox="0 0 22 22" fill="none"><path d="M2.2 6.6L11.0 15.8L19.8 6.6" stroke="#cccccc" stroke-width="2.2" fill="none" stroke-linecap="round" stroke-linejoin="round"/></svg>
<div style="left:257px;top:267.38px;font-family:'Liberation Sans', sans-serif;font-size:22px;line-height:30px;color:#cccccc;white-space:pre;font-weight:700;-webkit-text-stroke:0.15px currentColor;letter-spacing:0.106px;">Local</div>
<div style="left:195px;top:902px;width:1151px;height:1.5px;background:#2b2b2b;"></div>
<svg style="left:205px;top:914.0px;" width="22" height="22" viewBox="0 0 22 22" fill="none"><path d="M2.2 6.6L11.0 15.8L19.8 6.6" stroke="#cccccc" stroke-width="2.2" fill="none" stroke-linecap="round" stroke-linejoin="round"/></svg>
<div style="left:237px;top:909.18px;font-family:'Liberation Sans', sans-serif;font-size:24px;line-height:33px;color:#cccccc;white-space:pre;font-weight:700;-webkit-text-stroke:0.15px currentColor;letter-spacing:0.078px;">Watch</div>
<div style="left:195px;top:1206px;width:1151px;height:1.5px;background:#2b2b2b;"></div>
<div style="left:195px;top:1249px;width:1151px;height:241px;overflow:hidden">
<div style="left:62px;top:-6.01px;font-family:'Liberation Sans', sans-serif;font-size:26px;line-height:36px;color:#cccccc;white-space:pre;letter-spacing:0.857px;">Thread [execution-contexts-threadpool-1-thread-1]</div>
<div style="left:1021px;top:-6px;width:110px;height:32px;border-radius:5px;background:#353535"></div>
<div style="left:1021px;top:-2.78px;font-family:'Liberation Sans', sans-serif;font-size:21px;line-height:29px;color:#cccccc;white-space:pre;width:110px;text-align:center;">RUNNING</div>
<div style="left:62px;top:37.99px;font-family:'Liberation Sans', sans-serif;font-size:26px;line-height:36px;color:#cccccc;white-space:pre;letter-spacing:0.857px;">Thread [execution-contexts-threadpool-1-thread-2]</div>
<div style="left:1021px;top:39px;width:110px;height:32px;border-radius:5px;background:#353535"></div>
<div style="left:1021px;top:42.22px;font-family:'Liberation Sans', sans-serif;font-size:21px;line-height:29px;color:#cccccc;white-space:pre;width:110px;text-align:center;">RUNNING</div>
<svg style="left:29px;top:89.0px;" width="22" height="22" viewBox="0 0 22 22" fill="none"><path d="M2.2 6.6L11.0 15.8L19.8 6.6" stroke="#cccccc" stroke-width="2.2" fill="none" stroke-linecap="round" stroke-linejoin="round"/></svg>
<div style="left:62px;top:81.99px;font-family:'Liberation Sans', sans-serif;font-size:26px;line-height:36px;color:#cccccc;white-space:pre;letter-spacing:0.857px;">Thread [execution-contexts-threadpool-1-thread-3]</div>
<div style="left:859px;top:83px;width:272px;height:32px;border-radius:5px;background:#353535"></div>
<div style="left:859px;top:86.22px;font-family:'Liberation Sans', sans-serif;font-size:21px;line-height:29px;color:#cccccc;white-space:pre;width:272px;text-align:center;">PAUSED ON BREAKPOINT</div>
<div style="left:78px;top:131.14px;font-family:'Liberation Mono', monospace;font-size:22px;line-height:30px;color:#d4d4d4;white-space:pre;">Lexer$package$.$anonfun$1(Quotes,ReplaceRefs,Object,Log,CompileNameAndPattern,TypeRepr)</div>
<div style="left:78px;top:175.14px;font-family:'Liberation Mono', monospace;font-size:22px;line-height:30px;color:#8f8f8f;white-space:pre;">Lexer$package$$$Lambda/0x0000000801480000.apply(Object,Object): Object</div>
<div style="left:1019px;top:168.99px;font-family:'Liberation Sans', sans-serif;font-size:26px;line-height:36px;color:#8a8a8a;white-space:pre;letter-spacing:0.375px;">Unkn...</div>
<div style="left:78px;top:219.14px;font-family:'Liberation Mono', monospace;font-size:22px;line-height:30px;color:#8f8f8f;white-space:pre;">LinearSeqOps.foldLeft(Object,Function2): Object</div>
<div style="left:834px;top:212.99px;font-family:'Liberation Sans', sans-serif;font-size:26px;line-height:36px;color:#8a8a8a;white-space:pre;letter-spacing:0.357px;">Unknown Source</div>
<div style="left:1059px;top:217px;width:71px;height:34px;border-radius:17px;background:#333333"></div>
<div style="left:1059px;top:217.38px;font-family:'Liberation Sans', sans-serif;font-size:22px;line-height:30px;color:#9a9a9a;white-space:pre;width:71px;text-align:center;">186:1</div>
</div>
<div style="left:195px;top:1207px;width:1151px;height:42px;background:#181818;box-shadow:0 4px 4px -2px rgba(0,0,0,0.6)"></div>
<svg style="left:205px;top:1218.0px;" width="22" height="22" viewBox="0 0 22 22" fill="none"><path d="M2.2 6.6L11.0 15.8L19.8 6.6" stroke="#cccccc" stroke-width="2.2" fill="none" stroke-linecap="round" stroke-linejoin="round"/></svg>
<div style="left:237px;top:1213.18px;font-family:'Liberation Sans', sans-serif;font-size:24px;line-height:33px;color:#cccccc;white-space:pre;font-weight:700;-webkit-text-stroke:0.15px currentColor;letter-spacing:-0.033px;">Call Stack</div>
<div style="left:195px;top:1490px;width:1151px;height:1.5px;background:#2b2b2b;"></div>
<svg style="left:205px;top:1502.0px;" width="22" height="22" viewBox="0 0 22 22" fill="none"><path d="M2.2 6.6L11.0 15.8L19.8 6.6" stroke="#cccccc" stroke-width="2.2" fill="none" stroke-linecap="round" stroke-linejoin="round"/></svg>
<div style="left:237px;top:1497.18px;font-family:'Liberation Sans', sans-serif;font-size:24px;line-height:33px;color:#cccccc;white-space:pre;font-weight:700;-webkit-text-stroke:0.15px currentColor;letter-spacing:-0.155px;">Breakpoints</div>
<div style="left:246px;top:1544px;width:26px;height:26px;border-radius:5px;background:#ffffff;box-shadow:inset 0 0 0 2px #7a7a7a"></div>
<div style="left:279px;top:1538.99px;font-family:'Liberation Sans', sans-serif;font-size:26px;line-height:36px;color:#cccccc;white-space:pre;letter-spacing:0.488px;">Uncaught Exceptions</div>
<div style="left:246px;top:1588px;width:26px;height:26px;border-radius:5px;background:#ffffff;box-shadow:inset 0 0 0 2px #7a7a7a"></div>
<div style="left:279px;top:1582.99px;font-family:'Liberation Sans', sans-serif;font-size:26px;line-height:36px;color:#cccccc;white-space:pre;letter-spacing:0.456px;">Caught Exceptions</div>
<div style="left:211px;top:1637px;width:16px;height:16px;border-radius:8px;background:#e51400"></div>
<div style="left:246px;top:1632px;width:26px;height:26px;border-radius:5px;background:#0a7cf0"></div>
<svg style="left:246px;top:1632px;" width="26" height="26" viewBox="0 0 26 26" fill="none"><path d="M6 13.5L11 18.5L20.5 7.5" stroke="#ffffff" stroke-width="3" fill="none" stroke-linecap="round" stroke-linejoin="round"/></svg>
<div style="left:279px;top:1626.99px;font-family:'Liberation Sans', sans-serif;font-size:26px;line-height:36px;color:#cccccc;white-space:pre;letter-spacing:0.422px;">BrainfuckTest.scala</div>
<div style="left:537px;top:1626.99px;font-family:'Liberation Sans', sans-serif;font-size:26px;line-height:36px;color:#9d9d9d;white-space:pre;letter-spacing:0.757px;">test/src/alpaca/integration/brainfuck</div>
<div style="left:1290px;top:1628px;width:35px;height:34px;border-radius:17px;background:#3a3a3a"></div>
<div style="left:1290px;top:1631.38px;font-family:'Liberation Sans', sans-serif;font-size:22px;line-height:30px;color:#cccccc;white-space:pre;width:35px;text-align:center;">11</div>
<div style="left:211px;top:1681px;width:16px;height:16px;border-radius:8px;background:#e51400"></div>
<div style="left:246px;top:1676px;width:26px;height:26px;border-radius:5px;background:#0a7cf0"></div>
<svg style="left:246px;top:1676px;" width="26" height="26" viewBox="0 0 26 26" fill="none"><path d="M6 13.5L11 18.5L20.5 7.5" stroke="#ffffff" stroke-width="3" fill="none" stroke-linecap="round" stroke-linejoin="round"/></svg>
<div style="left:279px;top:1670.99px;font-family:'Liberation Sans', sans-serif;font-size:26px;line-height:36px;color:#cccccc;white-space:pre;letter-spacing:0.422px;">BrainfuckTest.scala</div>
<div style="left:537px;top:1670.99px;font-family:'Liberation Sans', sans-serif;font-size:26px;line-height:36px;color:#9d9d9d;white-space:pre;letter-spacing:0.757px;">test/src/alpaca/integration/brainfuck</div>
<div style="left:1287px;top:1672px;width:38px;height:34px;border-radius:17px;background:#3a3a3a"></div>
<div style="left:1287px;top:1675.38px;font-family:'Liberation Sans', sans-serif;font-size:22px;line-height:30px;color:#cccccc;white-space:pre;width:38px;text-align:center;">17</div>
<div style="left:211px;top:1725px;width:16px;height:16px;border-radius:8px;background:#e51400"></div>
<div style="left:246px;top:1720px;width:26px;height:26px;border-radius:5px;background:#0a7cf0"></div>
<svg style="left:246px;top:1720px;" width="26" height="26" viewBox="0 0 26 26" fill="none"><path d="M6 13.5L11 18.5L20.5 7.5" stroke="#ffffff" stroke-width="3" fill="none" stroke-linecap="round" stroke-linejoin="round"/></svg>
<div style="left:279px;top:1714.99px;font-family:'Liberation Sans', sans-serif;font-size:26px;line-height:36px;color:#cccccc;white-space:pre;letter-spacing:0.043px;">Lexer.scala</div>
<div style="left:436px;top:1714.99px;font-family:'Liberation Sans', sans-serif;font-size:26px;line-height:36px;color:#9d9d9d;white-space:pre;letter-spacing:0.537px;">src/alpaca/internal/lexer</div>
<div style="left:1281px;top:1716px;width:44px;height:34px;border-radius:17px;background:#3a3a3a"></div>
<div style="left:1281px;top:1719.38px;font-family:'Liberation Sans', sans-serif;font-size:22px;line-height:30px;color:#cccccc;white-space:pre;width:44px;text-align:center;">34</div>
<div style="left:211px;top:1769px;width:16px;height:16px;border-radius:8px;background:#e51400"></div>
<div style="left:246px;top:1764px;width:26px;height:26px;border-radius:5px;background:#0a7cf0"></div>
<svg style="left:246px;top:1764px;" width="26" height="26" viewBox="0 0 26 26" fill="none"><path d="M6 13.5L11 18.5L20.5 7.5" stroke="#ffffff" stroke-width="3" fill="none" stroke-linecap="round" stroke-linejoin="round"/></svg>
<div style="left:279px;top:1758.99px;font-family:'Liberation Sans', sans-serif;font-size:26px;line-height:36px;color:#cccccc;white-space:pre;letter-spacing:0.043px;">Lexer.scala</div>
<div style="left:436px;top:1758.99px;font-family:'Liberation Sans', sans-serif;font-size:26px;line-height:36px;color:#9d9d9d;white-space:pre;letter-spacing:0.537px;">src/alpaca/internal/lexer</div>
<div style="left:1281px;top:1760px;width:44px;height:34px;border-radius:17px;background:#3a3a3a"></div>
<div style="left:1281px;top:1763.38px;font-family:'Liberation Sans', sans-serif;font-size:22px;line-height:30px;color:#cccccc;white-space:pre;width:44px;text-align:center;">64</div>
<div style="left:211px;top:1813px;width:16px;height:16px;border-radius:8px;background:#e51400"></div>
<div style="left:246px;top:1808px;width:26px;height:26px;border-radius:5px;background:#0a7cf0"></div>
<svg style="left:246px;top:1808px;" width="26" height="26" viewBox="0 0 26 26" fill="none"><path d="M6 13.5L11 18.5L20.5 7.5" stroke="#ffffff" stroke-width="3" fill="none" stroke-linecap="round" stroke-linejoin="round"/></svg>
<div style="left:279px;top:1802.99px;font-family:'Liberation Sans', sans-serif;font-size:26px;line-height:36px;color:#cccccc;white-space:pre;letter-spacing:0.043px;">Lexer.scala</div>
<div style="left:436px;top:1802.99px;font-family:'Liberation Sans', sans-serif;font-size:26px;line-height:36px;color:#9d9d9d;white-space:pre;letter-spacing:0.537px;">src/alpaca/internal/lexer</div>
<div style="left:1281px;top:1804px;width:44px;height:34px;border-radius:17px;background:#3a3a3a"></div>
<div style="left:1281px;top:1807.38px;font-family:'Liberation Sans', sans-serif;font-size:22px;line-height:30px;color:#cccccc;white-space:pre;width:44px;text-align:center;">88</div>
<div style="left:211px;top:1857px;width:16px;height:16px;border-radius:8px;background:#e51400"></div>
<div style="left:246px;top:1852px;width:26px;height:26px;border-radius:5px;background:#0a7cf0"></div>
<svg style="left:246px;top:1852px;" width="26" height="26" viewBox="0 0 26 26" fill="none"><path d="M6 13.5L11 18.5L20.5 7.5" stroke="#ffffff" stroke-width="3" fill="none" stroke-linecap="round" stroke-linejoin="round"/></svg>
<div style="left:279px;top:1846.99px;font-family:'Liberation Sans', sans-serif;font-size:26px;line-height:36px;color:#cccccc;white-space:pre;letter-spacing:0.043px;">Lexer.scala</div>
<div style="left:436px;top:1846.99px;font-family:'Liberation Sans', sans-serif;font-size:26px;line-height:36px;color:#9d9d9d;white-space:pre;letter-spacing:0.537px;">src/alpaca/internal/lexer</div>
<div style="left:1281px;top:1848px;width:44px;height:34px;border-radius:17px;background:#3a3a3a"></div>
<div style="left:1281px;top:1851.38px;font-family:'Liberation Sans', sans-serif;font-size:22px;line-height:30px;color:#cccccc;white-space:pre;width:44px;text-align:center;">96</div>
<div style="left:211px;top:1901px;width:16px;height:16px;border-radius:8px;background:#e51400"></div>
<div style="left:246px;top:1896px;width:26px;height:26px;border-radius:5px;background:#0a7cf0"></div>
<svg style="left:246px;top:1896px;" width="26" height="26" viewBox="0 0 26 26" fill="none"><path d="M6 13.5L11 18.5L20.5 7.5" stroke="#ffffff" stroke-width="3" fill="none" stroke-linecap="round" stroke-linejoin="round"/></svg>
<div style="left:279px;top:1890.99px;font-family:'Liberation Sans', sans-serif;font-size:26px;line-height:36px;color:#cccccc;white-space:pre;letter-spacing:0.043px;">Lexer.scala</div>
<div style="left:436px;top:1890.99px;font-family:'Liberation Sans', sans-serif;font-size:26px;line-height:36px;color:#9d9d9d;white-space:pre;letter-spacing:0.537px;">src/alpaca/internal/lexer</div>
<div style="left:1273px;top:1892px;width:52px;height:34px;border-radius:17px;background:#3a3a3a"></div>
<div style="left:1273px;top:1895.38px;font-family:'Liberation Sans', sans-serif;font-size:22px;line-height:30px;color:#cccccc;white-space:pre;width:52px;text-align:center;">125</div>
<div style="left:113px;top:1932px;width:3022px;height:41px;background:#0078d4;border-radius:0 0 30px 30px"></div>
<svg style="left:144px;top:1938px;" width="28" height="28" viewBox="0 0 28 28" fill="none"><path d="M4 25L11 18L4 11M24 3L17 10L24 17" stroke="#ffffff" stroke-width="2" fill="none" stroke-linecap="round" stroke-linejoin="round"/></svg>
<div style="left:213px;top:1933.99px;font-family:'Liberation Sans', sans-serif;font-size:26px;line-height:36px;color:#ffffff;white-space:pre;letter-spacing:0.018px;">add-brainfuck-example*</div>
<svg style="left:500px;top:1936px;" width="36" height="34" viewBox="0 0 36 34" fill="none"><path d="M6 17A12 12 0 0 1 28 10.5M30 17A12 12 0 0 1 8 23.5" stroke="#ffffff" stroke-width="2" fill="none" stroke-linecap="round" stroke-linejoin="round"/><path d="M29 4V11H22M7 30V23H14" stroke="#ffffff" stroke-width="2" fill="none" stroke-linecap="round" stroke-linejoin="round"/></svg>
<svg style="left:566px;top:1939px;" width="30" height="30" viewBox="0 0 30 30" fill="none"><circle cx="15" cy="15" r="12" stroke="#ffffff" stroke-width="2" fill="none" stroke-linecap="round" stroke-linejoin="round"/><path d="M10.5 10.5L19.5 19.5M19.5 10.5L10.5 19.5" stroke="#ffffff" stroke-width="2" fill="none" stroke-linecap="round" stroke-linejoin="round"/></svg>
<div style="left:604px;top:1933.99px;font-family:'Liberation Sans', sans-serif;font-size:26px;line-height:36px;color:#ffffff;white-space:pre;">0</div>
<svg style="left:625px;top:1938px;" width="32" height="30" viewBox="0 0 32 30" fill="none"><path d="M16 3L29 27H3Z" stroke="#ffffff" stroke-width="2" fill="none" stroke-linecap="round" stroke-linejoin="round"/><path d="M16 11V19" stroke="#ffffff" stroke-width="2" fill="none" stroke-linecap="round" stroke-linejoin="round"/><circle cx="16" cy="23" r="1.3" fill="#ffffff"/></svg>
<div style="left:664px;top:1933.99px;font-family:'Liberation Sans', sans-serif;font-size:26px;line-height:36px;color:#ffffff;white-space:pre;">0</div>
<svg style="left:706px;top:1936px;" width="38" height="36" viewBox="0 0 38 36" fill="none"><path d="M12 5V14M12 5L34.5 17.5L17 27.5" stroke="#ffffff" stroke-width="2" fill="none" stroke-linecap="round" stroke-linejoin="round"/><ellipse cx="11" cy="26.5" rx="4.5" ry="5.2" stroke="#ffffff" stroke-width="2" fill="none"/><path d="M2.5 23.5L6.5 24.5M2.5 30H6.5M19.5 23.5L15.5 24.5M19.5 30H15.5M8 19.5L9.5 21.5M14 19.5L12.5 21.5M4 35L7 31.5M18 35L15 31.5M6.5 26H15.5" stroke="#ffffff" stroke-width="1.8" fill="none" stroke-linecap="round"/></svg>
<div style="left:751px;top:1933.99px;font-family:'Liberation Sans', sans-serif;font-size:26px;line-height:36px;color:#ffffff;white-space:pre;letter-spacing:-0.255px;">Debug Macro (Compile-time) (alpaca)</div>
<svg style="left:1387px;top:1935px;" width="28" height="36" viewBox="0 0 28 36" fill="none"><circle cx="14" cy="18" r="6" stroke="#ffffff" stroke-width="2" fill="none" stroke-linecap="round" stroke-linejoin="round"/><path d="M14 2V12M14 24V34" stroke="#ffffff" stroke-width="2" fill="none" stroke-linecap="round" stroke-linejoin="round"/></svg>
<div style="left:1424px;top:1933.99px;font-family:'Liberation Sans', sans-serif;font-size:26px;line-height:36px;color:#ffffff;white-space:pre;letter-spacing:-0.296px;">Bartłomiej Kozak (4 months ago)</div>
<div style="left:1827px;top:1933.99px;font-family:'Liberation Sans', sans-serif;font-size:26px;line-height:36px;color:#ffffff;white-space:pre;letter-spacing:-0.518px;">Ln 96, Col 1</div>
<div style="left:1997px;top:1933.99px;font-family:'Liberation Sans', sans-serif;font-size:26px;line-height:36px;color:#ffffff;white-space:pre;letter-spacing:-0.738px;">Spaces: 2</div>
<div style="left:2141px;top:1933.99px;font-family:'Liberation Sans', sans-serif;font-size:26px;line-height:36px;color:#ffffff;white-space:pre;letter-spacing:-0.734px;">UTF-8</div>
<div style="left:2245px;top:1933.99px;font-family:'Liberation Sans', sans-serif;font-size:26px;line-height:36px;color:#ffffff;white-space:pre;letter-spacing:-2.172px;">LF</div>
<div style="left:2307px;top:1933.99px;font-family:'Liberation Sans', sans-serif;font-size:26px;line-height:36px;color:#ffffff;white-space:pre;letter-spacing:0.802px;">{ }</div>
<div style="left:2349px;top:1933.99px;font-family:'Liberation Sans', sans-serif;font-size:26px;line-height:36px;color:#ffffff;white-space:pre;letter-spacing:-1.209px;">Scala</div>
<div style="left:2441px;top:1933.99px;font-family:'Liberation Sans', sans-serif;font-size:26px;line-height:36px;color:#ffffff;white-space:pre;letter-spacing:0.024px;">root-module</div>
<svg style="left:2589px;top:1940px;" width="30" height="26" viewBox="0 0 30 26" fill="none"><path d="M3 14L10 22L27 3" stroke="#ffffff" stroke-width="2" fill="none" stroke-linecap="round" stroke-linejoin="round"/></svg>
<div style="left:2652px;top:1933.99px;font-family:'Liberation Sans', sans-serif;font-size:26px;line-height:36px;color:#ffffff;white-space:pre;letter-spacing:0.303px;">mill-bsp</div>
<svg style="left:2752px;top:1938px;" width="32" height="30" viewBox="0 0 32 30" fill="none"><path d="M12 11.5H9.5A5.5 5.5 0 0 0 9.5 22.5H15.5A5.5 5.5 0 0 0 19 13" stroke="#ffffff" stroke-width="2" fill="none" stroke-linecap="round" stroke-linejoin="round"/><path d="M20 18.5H22.5A5.5 5.5 0 0 0 22.5 7.5H16.5A5.5 5.5 0 0 0 13 17" stroke="#ffffff" stroke-width="2" fill="none" stroke-linecap="round" stroke-linejoin="round"/></svg>
<div style="left:2816px;top:1933.99px;font-family:'Liberation Sans', sans-serif;font-size:26px;line-height:36px;color:#ffffff;white-space:pre;letter-spacing:0.026px;">Antigravity - Settings</div>
<svg style="left:3088px;top:1936px;" width="34" height="34" viewBox="0 0 34 34" fill="none"><path d="M7 25C9 22 9 19 9 15C9 10 12 6.5 16 6.5C20 6.5 23 10 23 15C23 19 23 22 25 25Z" stroke="#ffffff" stroke-width="2" fill="none" stroke-linecap="round" stroke-linejoin="round"/><path d="M13 29C14 31 18 31 19 29" stroke="#ffffff" stroke-width="2" fill="none" stroke-linecap="round" stroke-linejoin="round"/><circle cx="25" cy="7" r="5" fill="#ffffff"/></svg>
<svg style="left:1166px;top:1165px;" width="30" height="40" viewBox="0 0 30 40" fill="none"><path d="M5.5 3V28L11 23.5L15.5 33.5L20 31.5L16 22.5H24.5Z" fill="#000000" stroke="#ffffff" stroke-width="2.4" stroke-linejoin="round"/></svg>
</body></html>
